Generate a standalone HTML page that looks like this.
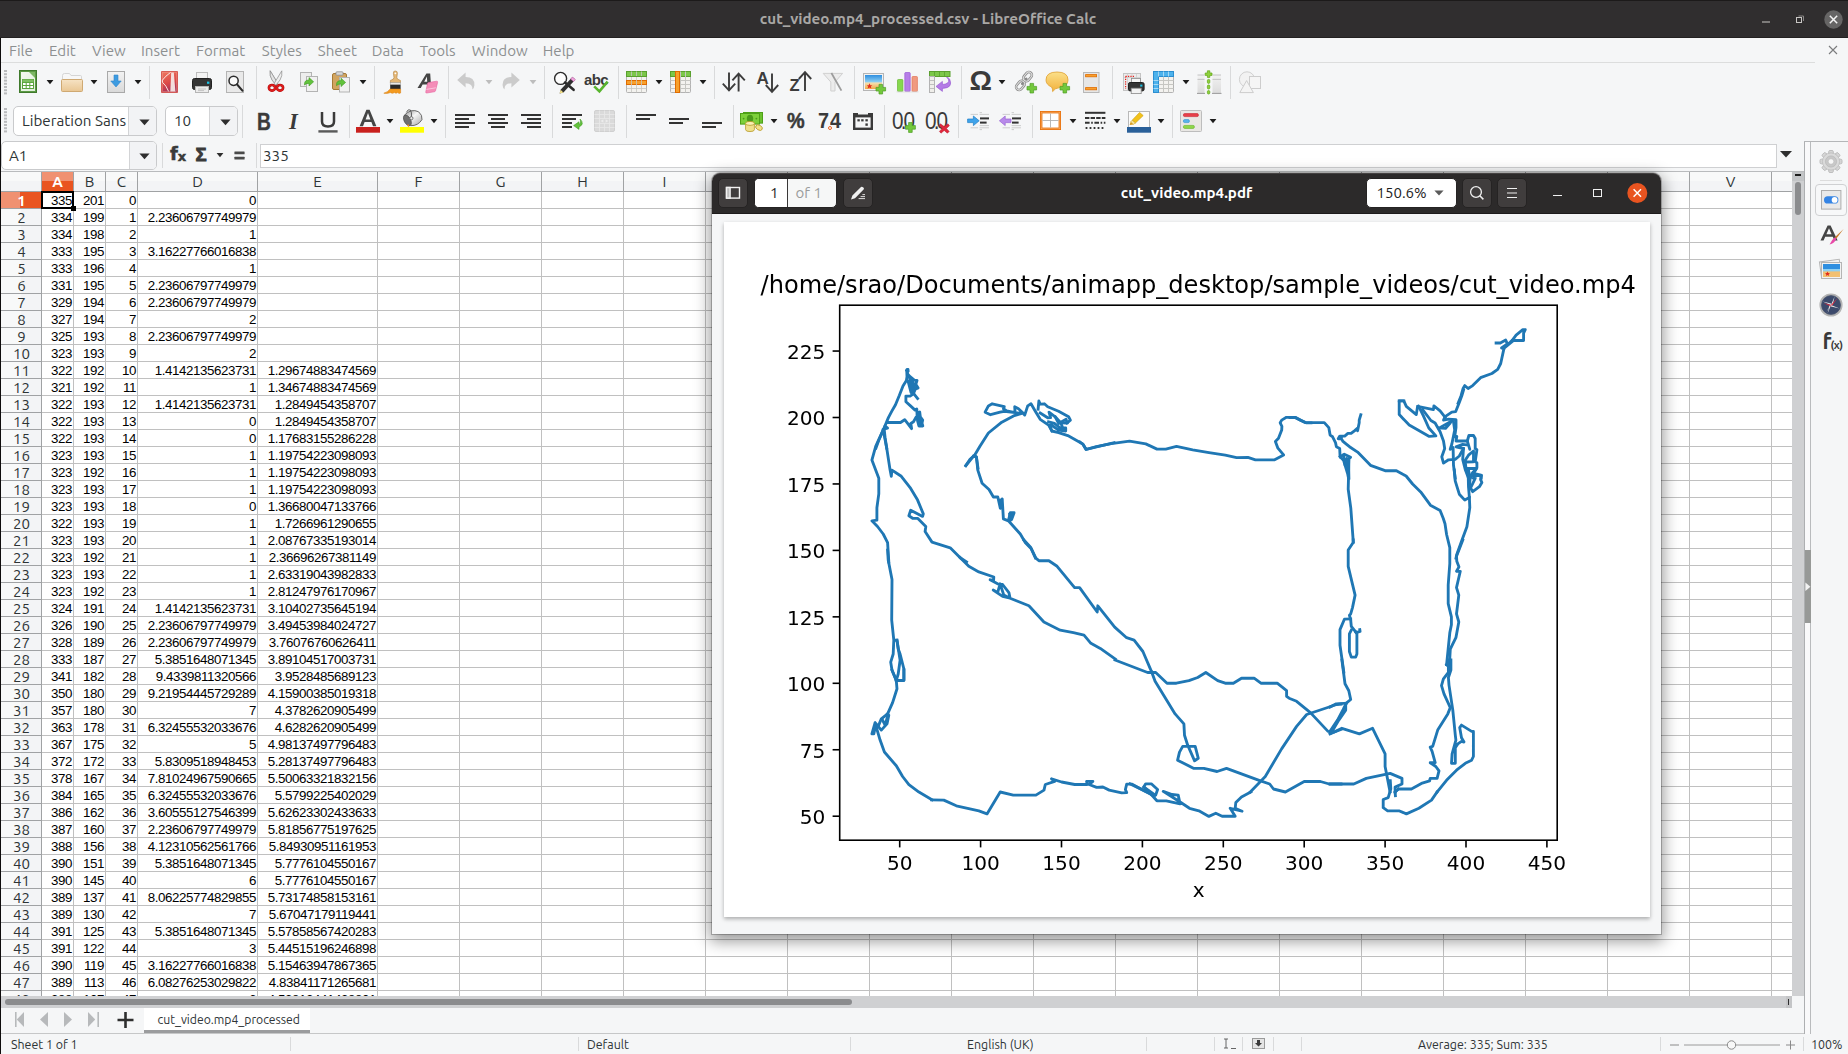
<!DOCTYPE html>
<html lang="en"><head><meta charset="utf-8"><title>cut_video.mp4_processed.csv - LibreOffice Calc</title>
<style>
html,body{margin:0;padding:0;background:#f5f6f7;}
body{width:1848px;height:1054px;overflow:hidden;font-family:"Ubuntu","Liberation Sans",sans-serif;font-size:15.1px;color:#2e3436;}
#root{position:relative;width:1848px;height:1054px;overflow:hidden;background:#f5f6f7;}
.abs{position:absolute;}
.t{position:absolute;white-space:nowrap;line-height:1;}
svg{position:absolute;overflow:visible;}
/* title bar */
#titlebar{position:absolute;left:0;top:0;width:1848px;height:38px;background:#302e2f;box-sizing:border-box;border-top:1px solid #1c1a1a;border-bottom:1px solid #232121;}
#titlebar .title{position:absolute;left:4px;width:1848px;top:9px;text-align:center;color:#a9a7a5;font-weight:bold;font-size:15.17px;line-height:18px;}
/* menu */
#menubar{position:absolute;left:0;top:38px;width:1848px;height:25px;}
#menubar span{position:absolute;top:4px;color:#8d9091;font-size:15.1px;line-height:18px;}
.sep{position:absolute;width:1px;background:#d9dadb;}
.arrow{position:absolute;width:0;height:0;border-left:4px solid transparent;border-right:4px solid transparent;border-top:4px solid #2e2e2e;}
.combo{position:absolute;box-sizing:border-box;border:1px solid #c9cacc;border-radius:5px;background:#fff;overflow:hidden;}
.combo .btn{position:absolute;top:0;bottom:0;right:0;background:#f2f3f5;border-left:1px solid #d3d4d6;}
/* grid */
#grid{position:absolute;left:0;top:172px;width:1792px;height:824px;background:#fff;overflow:hidden;}
.ch{position:absolute;top:0;height:19px;text-align:center;font-size:15.1px;line-height:19px;color:#2e3436;}
.rh{position:absolute;left:1px;width:41px;height:16px;text-align:center;font-size:15.1px;line-height:17px;color:#2e3436;}
.c{position:absolute;height:16px;line-height:17px;font-family:"Liberation Sans",sans-serif;font-size:13.33px;letter-spacing:-0.41px;color:#000;text-align:right;white-space:nowrap;}

#leftedge{position:absolute;left:0;top:38px;width:1px;height:1016px;background:#0e0c0c;}

</style></head>
<body>
<div id="root">
<div id="titlebar">
<div class="title">cut_video.mp4_processed.csv - LibreOffice Calc</div>
<svg style="left:1756.5px;top:7.5px" width="90" height="22" viewBox="0 0 90 22">
<rect x="5" y="12.5" width="8" height="1" fill="#c9c7c5"/>
<rect x="39.5" y="8.5" width="5" height="5" fill="none" stroke="#c9c7c5" stroke-width="1"/>
<path d="M41.5 7 H46.5 V12" fill="none" stroke="#8a8887" stroke-width="1"/>
<circle cx="76.5" cy="10.5" r="9.2" fill="#666565"/>
<path d="M72.8 6.8 L80.2 14.2 M80.2 6.8 L72.8 14.2" stroke="#f4f4f4" stroke-width="1.5" fill="none"/>
</svg>
</div>

<div id="menubar">
<span style="left:9px">File</span><span style="left:49px">Edit</span><span style="left:92px">View</span><span style="left:141px">Insert</span><span style="left:196px">Format</span><span style="left:261.8px">Styles</span><span style="left:317.8px">Sheet</span><span style="left:371.8px">Data</span><span style="left:419.8px">Tools</span><span style="left:471.8px">Window</span><span style="left:542.8px">Help</span>
<svg style="left:1827px;top:6px" width="12" height="12" viewBox="0 0 12 12"><path d="M2 2 L10 10 M10 2 L2 10" stroke="#7a7c7d" stroke-width="1.1" fill="none"/></svg>
<div class="abs" style="left:0;top:24px;width:1815px;height:1px;background:#dcdddd"></div>
</div>

<div id="tb1">
<svg style="left:4px;top:70px" width="3" height="26" viewBox="0 0 3 26"><rect x="0" y="0" width="3" height="2" fill="#b9babc"/><rect x="0" y="3.2" width="3" height="2" fill="#b9babc"/><rect x="0" y="6.4" width="3" height="2" fill="#b9babc"/><rect x="0" y="9.6" width="3" height="2" fill="#b9babc"/><rect x="0" y="12.8" width="3" height="2" fill="#b9babc"/><rect x="0" y="16" width="3" height="2" fill="#b9babc"/><rect x="0" y="19.2" width="3" height="2" fill="#b9babc"/><rect x="0" y="22.4" width="3" height="2" fill="#b9babc"/></svg>
<svg style="left:19px;top:70px" width="18" height="23" viewBox="0 0 18 23"><defs><linearGradient id="gN" x1="0" y1="0" x2="1" y2="1"><stop offset="0" stop-color="#f4f9f1"/><stop offset="1" stop-color="#dfeeda"/></linearGradient></defs><rect x="0.5" y="0.5" width="17" height="22" fill="#5c9a45" stroke="#3f7a2c"/><rect x="2" y="2" width="14" height="19" fill="url(#gN)"/><path d="M10 2 L16 2 L16 8 Z" fill="#7db765"/><rect x="3.5" y="9.5" width="11" height="9" fill="#fff" stroke="#5aa33c"/><path d="M3.5 12.5 H14.5 M3.5 15.5 H14.5 M7.2 9.5 V18.5 M10.8 9.5 V18.5" stroke="#5aa33c" stroke-width="1" fill="none"/><rect x="3.5" y="9.5" width="11" height="2.6" fill="#7fbf62"/></svg>
<svg style="left:46px;top:80px" width="8" height="5" viewBox="0 0 8 5"><path d="M0.6 0 H7.4 L4 4.2 Z" fill="#1c1c1c"/></svg>
<svg style="left:61px;top:72px" width="22" height="20" viewBox="0 0 22 20"><defs><linearGradient id="gF" x1="0" y1="0" x2="0" y2="1"><stop offset="0" stop-color="#f6e3c4"/><stop offset="1" stop-color="#e9c693"/></linearGradient></defs><path d="M1.5 3.5 Q1.5 1.5 3.5 1.5 H8.5 L10 3.5 H19.5 Q20.5 3.5 20.5 4.8 V8 H1.5 Z" fill="#f7f7f7" stroke="#d5d5d5"/><rect x="0.5" y="7.5" width="21" height="12" rx="1" fill="url(#gF)" stroke="#cfa972"/></svg>
<svg style="left:90px;top:80px" width="8" height="5" viewBox="0 0 8 5"><path d="M0.6 0 H7.4 L4 4.2 Z" fill="#1c1c1c"/></svg>
<svg style="left:107px;top:71px" width="18" height="22" viewBox="0 0 18 22"><defs><linearGradient id="gS" x1="0" y1="0" x2="0" y2="1"><stop offset="0" stop-color="#f3f3f3"/><stop offset="1" stop-color="#d9d9d9"/></linearGradient></defs><rect x="0.5" y="0.5" width="17" height="21" fill="url(#gS)" stroke="#a9a9a9"/><path d="M7 4 H11 V10 H14.2 L9 16 L3.8 10 H7 Z" fill="#3d9be0" stroke="#2f86cc" stroke-width="0.6"/></svg>
<svg style="left:133.5px;top:80px" width="8" height="5" viewBox="0 0 8 5"><path d="M0.6 0 H7.4 L4 4.2 Z" fill="#1c1c1c"/></svg>
<div class="sep" style="left:149px;top:66px;height:33px"></div>
<svg style="left:160.5px;top:70.5px" width="17" height="22" viewBox="0 0 17 22"><defs><linearGradient id="gP" x1="0" y1="0" x2="0.3" y2="1"><stop offset="0" stop-color="#ee7a60"/><stop offset="0.6" stop-color="#dc4a48"/><stop offset="1" stop-color="#a8345a"/></linearGradient></defs><rect x="0.6" y="0.6" width="15.9" height="20.8" fill="url(#gP)" stroke="#d2483f" stroke-width="0.8"/><rect x="1.6" y="1.6" width="13.9" height="18.8" fill="none" stroke="#f3a090" stroke-width="0.6" opacity="0.7"/><path d="M10.2 1.4 L12.8 1.4 L14.4 20.4 L9.3 20.4 Z" fill="#f4e6e4" opacity="0.95"/><path d="M9.6 1.4 Q4.4 5 1.4 9.2 L1.4 11.2 Q5.2 14.4 7.6 20.4" fill="none" stroke="#fbe9e6" stroke-width="1"/></svg>
<svg style="left:192px;top:72px" width="20" height="21" viewBox="0 0 20 21"><rect x="4.5" y="0.5" width="11" height="7" fill="#f4f4f4" stroke="#bdbdbd"/><rect x="0.5" y="6.5" width="19" height="11" rx="2" fill="#353535" stroke="#222"/><rect x="15" y="9.6" width="2.4" height="2.2" fill="#19c3e6"/><rect x="3.5" y="14.5" width="13" height="6" fill="#ececec" stroke="#b5b5b5"/><path d="M6 17 H14 M6 18.6 H12" stroke="#b8b8b8" stroke-width="0.8"/></svg>
<svg style="left:226px;top:71px" width="18" height="22" viewBox="0 0 18 22"><rect x="0.5" y="0.5" width="17" height="21" fill="#e9e9e9" stroke="#b4b4b4"/><circle cx="7.6" cy="9.8" r="4.6" fill="#fbfbfb" stroke="#2b2b2b" stroke-width="1.5"/><path d="M11 13.4 L16.4 19.6" stroke="#2b2b2b" stroke-width="2.2" stroke-linecap="round"/></svg>
<div class="sep" style="left:256px;top:66px;height:33px"></div>
<svg style="left:267px;top:70px" width="18" height="23" viewBox="0 0 18 23"><path d="M3.2 0.8 Q2.4 6 5.6 10.4 L9.6 15.6 L8 16.4 L10.6 13 Z" fill="#dcdcdc" stroke="#8a8a8a" stroke-width="0.7"/><path d="M3.2 0.8 L10.8 13.4 L9.2 15.4 L5 10 Q2.4 6 3.2 0.8 Z" fill="#e4e4e4" stroke="#8a8a8a" stroke-width="0.7"/><path d="M14.8 0.8 L7.2 13.4 L8.8 15.4 L13 10 Q15.6 6 14.8 0.8 Z" fill="#efefef" stroke="#8a8a8a" stroke-width="0.7"/><ellipse cx="5" cy="17.8" rx="3.1" ry="2.8" fill="none" stroke="#a80c0c" stroke-width="2.6"/><ellipse cx="13" cy="17.8" rx="3.1" ry="2.8" fill="none" stroke="#a80c0c" stroke-width="2.6"/><ellipse cx="5" cy="17.8" rx="3.1" ry="2.8" fill="none" stroke="#e01c1c" stroke-width="1.6"/><ellipse cx="13" cy="17.8" rx="3.1" ry="2.8" fill="none" stroke="#e01c1c" stroke-width="1.6"/></svg>
<svg style="left:300px;top:72px" width="18" height="20" viewBox="0 0 18 20"><rect x="0.5" y="0.5" width="11" height="14" fill="#ededed" stroke="#b3b3b3"/><rect x="6.5" y="4.5" width="11" height="15" fill="#f1f1f1" stroke="#b3b3b3"/><path d="M4.5 12 Q4.5 8 9 8 V5.6 L13.6 9.8 L9 14 V11.4 Q6 11.2 4.5 13 Z" fill="#62c23c" stroke="#3f9a22" stroke-width="0.6"/></svg>
<svg style="left:332px;top:70.5px" width="18" height="22" viewBox="0 0 18 22"><rect x="0.5" y="2.5" width="14" height="16" rx="1.5" fill="#d2a561" stroke="#a67a36"/><rect x="4" y="0.8" width="7" height="3.4" rx="0.8" fill="#dadada" stroke="#8c8c8c" stroke-width="0.8"/><rect x="7.5" y="6.5" width="10" height="14.5" fill="#f1f1f1" stroke="#b3b3b3"/><path d="M4.5 13.4 Q4.5 9.6 9 9.6 V7.2 L13.6 11.4 L9 15.6 V13 Q6 12.8 4.5 14.6 Z" fill="#62c23c" stroke="#3f9a22" stroke-width="0.6"/></svg>
<svg style="left:359px;top:80px" width="8" height="5" viewBox="0 0 8 5"><path d="M0.6 0 H7.4 L4 4.2 Z" fill="#1c1c1c"/></svg>
<div class="sep" style="left:374px;top:66px;height:33px"></div>
<svg style="left:383px;top:69.5px" width="22" height="25" viewBox="0 0 22 25"><path d="M12.2 1 Q14.6 1 14.4 3.2 L13.8 7.5 Q13.8 9.4 16.4 10 L17.4 10.4 V13 H7.4 V10.4 L8.4 10 Q11 9.4 11 7.5 L10.4 3.2 Q10.2 1 12.2 1 Z" fill="#e5b876" stroke="#b98a47" stroke-width="0.7"/><circle cx="12.4" cy="3.3" r="0.9" fill="#fff"/><rect x="7.2" y="12.6" width="10.4" height="2.2" fill="#e9e9e9" stroke="#9a9a9a" stroke-width="0.5"/><rect x="7.2" y="14.8" width="10.4" height="4.4" fill="#2a2a2a"/><path d="M7.2 19 H17.6 V23 Q16 24 14.5 22.6 Q13 24 11.6 22.6 Q9 24 7.4 22.6 Q4 24 0.8 23.2 Q5 22 7.2 19 Z" fill="#f39a1f" stroke="#d57a0c" stroke-width="0.5"/></svg>
<svg style="left:416px;top:72px" width="24" height="23" viewBox="0 0 24 23"><path d="M1.5 16 L10.4 1.5 H14.2 L15.2 16 H11.6 L11.4 12.6 H6.6 L4.8 16 Z M8.2 9.8 H11.2 L10.9 4.6 Z" fill="#454545"/><path d="M12.4 10.6 L20.6 9.2 Q21.8 9 21.6 10.4 L19.6 18.4 Q19.4 19.6 18.2 19.8 L10.8 21 Q9.4 21.2 9.8 19.8 L11.4 11.8 Q11.6 10.8 12.4 10.6 Z" fill="#f48db8" stroke="#e763a0" stroke-width="0.6"/><path d="M10.4 17.4 L19.9 15.8" stroke="#fbc3dc" stroke-width="1"/></svg>
<div class="sep" style="left:448px;top:66px;height:33px"></div>
<svg style="left:456px;top:71px" width="21" height="20" viewBox="0 0 21 20"><path d="M9.6 1.6 V6 Q18.8 6 18.4 14.2 Q18.2 17 16.4 18.6 Q17 12.4 9.6 12.2 V16.4 L1.2 9 Z" fill="#cbcbcb"/></svg>
<svg style="left:485px;top:80px" width="8" height="5" viewBox="0 0 8 5"><path d="M0.6 0 H7.4 L4 4.2 Z" fill="#bdbdbd"/></svg>
<svg style="left:500px;top:71px" width="21" height="20" viewBox="0 0 21 20"><path d="M11.4 1.6 V6 Q2.2 6 2.6 14.2 Q2.8 17 4.6 18.6 Q4 12.4 11.4 12.2 V16.4 L19.8 9 Z" fill="#cbcbcb"/></svg>
<svg style="left:529px;top:80px" width="8" height="5" viewBox="0 0 8 5"><path d="M0.6 0 H7.4 L4 4.2 Z" fill="#bdbdbd"/></svg>
<div class="sep" style="left:544px;top:66px;height:33px"></div>
<svg style="left:553px;top:71px" width="24" height="24" viewBox="0 0 24 24"><circle cx="7.6" cy="7.4" r="6" fill="#fdfdfd" stroke="#2b2b2b" stroke-width="1.4"/><path d="M12 11.6 L20.6 18.8" stroke="#2b2b2b" stroke-width="2.6" stroke-linecap="round"/><path d="M19.4 6 L22.4 8.6 L10.4 21.4 L6.6 22.6 L7.6 18.8 Z" fill="#2f2f2f"/><path d="M19.4 6 L22.4 8.6 L20.6 10.6 L17.6 8 Z" fill="#f0a3dc" stroke="#c96fb4" stroke-width="0.5"/><path d="M7.6 18.8 L10.4 21.4 L6.6 22.6 Z" fill="#f3e08a"/></svg>
<div class="t" style="left:584px;top:72px;font-size:15px;font-weight:bold;color:#3a3a3a;letter-spacing:-0.6px;font-family:'Liberation Sans',sans-serif">abc</div>
<svg style="left:592px;top:80px" width="18" height="14" viewBox="0 0 18 14"><path d="M2.2 6.4 L7.4 11.4 L15.6 1.6" fill="none" stroke="#58b52e" stroke-width="2.6"/></svg>
<div class="sep" style="left:618px;top:66px;height:33px"></div>
<svg style="left:626px;top:71px" width="21" height="22" viewBox="0 0 21 22"><rect x="0.5" y="0.5" width="20" height="21" rx="1" fill="#f3f2ef" stroke="#b3b3b3"/><rect x="0.5" y="0.5" width="20" height="5" fill="#7cc74a" stroke="#5aa02e"/><rect x="0.5" y="9.5" width="20" height="4" fill="#f8a02b" stroke="#e06c00"/><path d="M0.5 17.5 H20.5 M5.5 0.5 V21.5 M10.5 0.5 V21.5 M15.5 0.5 V21.5" stroke="#c6c6c2" stroke-width="1" fill="none" opacity="0.8"/><path d="M0.5 5.5 H20.5" stroke="#5aa02e"/></svg>
<svg style="left:655px;top:80px" width="8" height="5" viewBox="0 0 8 5"><path d="M0.6 0 H7.4 L4 4.2 Z" fill="#1c1c1c"/></svg>
<svg style="left:670px;top:71px" width="21" height="22" viewBox="0 0 21 22"><rect x="0.5" y="0.5" width="20" height="21" rx="1" fill="#f3f2ef" stroke="#b3b3b3"/><rect x="0.5" y="0.5" width="20" height="5" fill="#7cc74a" stroke="#5aa02e"/><path d="M0.5 9.5 H20.5 M0.5 13.5 H20.5 M0.5 17.5 H20.5 M10.5 0.5 V21.5 M15.5 0.5 V21.5" stroke="#c6c6c2" stroke-width="1" fill="none"/><rect x="5.5" y="0.5" width="4" height="21" fill="#f8a02b" stroke="#e06c00"/></svg>
<svg style="left:699px;top:80px" width="8" height="5" viewBox="0 0 8 5"><path d="M0.6 0 H7.4 L4 4.2 Z" fill="#1c1c1c"/></svg>
<div class="sep" style="left:714px;top:66px;height:33px"></div>
<svg style="left:721px;top:71px" width="26" height="22" viewBox="0 0 26 22"><path d="M8 1.5 V19 M1.8 12.6 L8 19.4 L14.2 12.6" fill="none" stroke="#3c3c3c" stroke-width="1.9"/><path d="M17.6 20.5 V3 M11.4 9.4 L17.6 2.6 L23.8 9.4" fill="none" stroke="#3c3c3c" stroke-width="1.9"/></svg>
<div class="t" style="left:756.5px;top:69.5px;font-size:17px;font-weight:bold;color:#3c3c3c;font-family:'Liberation Sans',sans-serif">A</div>
<svg style="left:764px;top:73px" width="16" height="21" viewBox="0 0 16 21"><path d="M8 0.5 V18.4 M1.8 12 L8 18.8 L14.2 12" fill="none" stroke="#3c3c3c" stroke-width="1.9"/></svg>
<div class="t" style="left:789.5px;top:76.5px;font-size:16.5px;font-weight:bold;color:#3c3c3c;font-family:'Liberation Sans',sans-serif">Z</div>
<svg style="left:797px;top:70px" width="16" height="22" viewBox="0 0 16 22"><path d="M8 21 V2.6 M1.8 9 L8 2.2 L14.2 9" fill="none" stroke="#3c3c3c" stroke-width="1.9"/></svg>
<svg style="left:822px;top:71px" width="22" height="22" viewBox="0 0 22 22"><path d="M1.2 2.4 H20.6 L13 11 V20 H8.8 V11 Z" fill="#ececec" stroke="#d0d0d0" stroke-width="1"/><path d="M9.4 2 L19.4 19.6" stroke="#9c9c9c" stroke-width="1.8"/></svg>
<div class="sep" style="left:854px;top:66px;height:33px"></div>
<svg style="left:863px;top:73px" width="24" height="22" viewBox="0 0 24 22"><defs><linearGradient id="gI" x1="0" y1="0" x2="0" y2="1"><stop offset="0" stop-color="#2f8fe0"/><stop offset="0.5" stop-color="#8fd0f2"/><stop offset="0.56" stop-color="#f5e0b0"/><stop offset="1" stop-color="#f0a848"/></linearGradient></defs><rect x="0.5" y="0.5" width="20" height="17" fill="#f2f2f2" stroke="#b5b5b5"/><rect x="2" y="2" width="17" height="14" fill="url(#gI)"/><path d="M6.5 10.2 L7.3 12.2 L9.4 12.4 L7.8 13.6 L8.4 15.6 L6.5 14.4 L4.6 15.6 L5.2 13.6 L3.6 12.4 L5.7 12.2 Z" fill="#e32a1c"/><path d="M16 11.4 H19.6 V14.4 H22.6 V18 H19.6 V21 H16 V18 H13 V14.4 H16 Z" fill="#73c83c" stroke="#4e9e24" stroke-width="0.7"/></svg>
<svg style="left:896px;top:71px" width="23" height="22" viewBox="0 0 23 22"><rect x="1.5" y="8.5" width="5.4" height="12" rx="0.8" fill="#86d84e" stroke="#68b634" stroke-width="0.7"/><rect x="8.8" y="1.5" width="5.4" height="19" rx="0.8" fill="#b67ee8" stroke="#9a5ad4" stroke-width="0.7"/><rect x="16" y="5.5" width="5.4" height="15" rx="0.8" fill="#f09a80" stroke="#e07458" stroke-width="0.7"/><path d="M0.5 20.9 H22.5" stroke="#d8d8d8" stroke-width="0.8"/></svg>
<svg style="left:929px;top:71px" width="22" height="22" viewBox="0 0 22 22"><rect x="0.5" y="0.5" width="20.5" height="5" fill="#7cc74a" stroke="#5aa02e"/><path d="M5.5 0.5 V5.5 M10.5 0.5 V5.5 M15.5 0.5 V5.5" stroke="#5aa02e" stroke-width="0.8"/><rect x="0.5" y="5.5" width="5" height="16" fill="#efeeea" stroke="#b3b3b3"/><path d="M0.5 9.5 H5.5 M0.5 13.5 H5.5 M0.5 17.5 H5.5" stroke="#b3b3b3" stroke-width="0.8"/><path d="M17.6 6.2 Q22.6 10.8 16.4 13 Q15 13.4 13.4 13.4 V10.4 L7 15.4 L13.4 20.4 V17.4 Q24.6 17 20.6 8 Q19.6 6.6 17.6 6.2 Z" fill="#b47be6" stroke="#9254cf" stroke-width="0.6"/></svg>
<div class="sep" style="left:961px;top:66px;height:33px"></div>
<div class="t" style="left:969.5px;top:67px;font-size:28px;font-weight:bold;color:#3a3a3a;font-family:'Liberation Sans',sans-serif">&#937;</div>
<svg style="left:998px;top:80px" width="8" height="5" viewBox="0 0 8 5"><path d="M0.6 0 H7.4 L4 4.2 Z" fill="#1c1c1c"/></svg>
<svg style="left:1014px;top:70px" width="24" height="25" viewBox="0 0 24 25"><g fill="none" stroke="#8a8a8a" stroke-width="2.6" stroke-linecap="round"><rect x="10.6" y="1.6" width="6" height="10" rx="3" transform="rotate(40 13.6 6.6)"/><rect x="3.4" y="10.4" width="6" height="10" rx="3" transform="rotate(40 6.4 15.4)"/><path d="M8.2 13.8 L12.2 8.8"/></g><g fill="none" stroke="#e2e2e2" stroke-width="1" stroke-linecap="round"><rect x="10.6" y="1.6" width="6" height="10" rx="3" transform="rotate(40 13.6 6.6)"/><rect x="3.4" y="10.4" width="6" height="10" rx="3" transform="rotate(40 6.4 15.4)"/></g><path d="M16 13.4 H19.6 V16.4 H22.6 V20 H19.6 V23 H16 V20 H13 V16.4 H16 Z" fill="#73c83c" stroke="#4e9e24" stroke-width="0.7"/></svg>
<svg style="left:1045px;top:71px" width="26" height="24" viewBox="0 0 26 24"><defs><linearGradient id="gC" x1="0" y1="0" x2="0" y2="1"><stop offset="0" stop-color="#fbe08a"/><stop offset="1" stop-color="#f2b13c"/></linearGradient></defs><path d="M12 1 Q23 1 23 9 Q23 15.4 14.6 16.6 Q10 17 7.6 20.6 Q8 18 6.6 16 Q1 13.6 1 9 Q1 1 12 1 Z" fill="url(#gC)" stroke="#e0a030" stroke-width="0.8"/><path d="M18 12.4 H21.6 V15.4 H24.6 V19 H21.6 V22 H18 V19 H15 V15.4 H18 Z" fill="#73c83c" stroke="#4e9e24" stroke-width="0.7"/></svg>
<svg style="left:1083px;top:72px" width="17" height="21" viewBox="0 0 17 21"><rect x="0.5" y="0.5" width="15.5" height="20" fill="#e6e6e6" stroke="#b8b8b8"/><rect x="2.6" y="2.6" width="11" height="2.2" fill="#f8a02b" stroke="#e06c00" stroke-width="0.8"/><rect x="2.6" y="15.6" width="11" height="2.2" fill="#f8a02b" stroke="#e06c00" stroke-width="0.8"/></svg>
<div class="sep" style="left:1112px;top:66px;height:33px"></div>
<svg style="left:1122.5px;top:73px" width="23" height="22" viewBox="0 0 23 22"><rect x="0.5" y="0.5" width="17" height="17" fill="#ececec" stroke="#c4c4c4"/><path d="M0.5 4.5 H17.5 M4.5 0.5 V17.5 M9 0.5 V4.5 M13.5 0.5 V4.5" stroke="#c9c9c9" stroke-width="0.7"/><path d="M2.6 3.4 H12 M2.6 3.4 V16" stroke="#e8201c" stroke-width="1.2" stroke-dasharray="1.2 1.2" fill="none"/><rect x="8.5" y="5.5" width="9" height="5" fill="#f6f6f6" stroke="#8a8a8a" stroke-width="0.8"/><rect x="5.5" y="9.5" width="15.6" height="8.4" rx="1.6" fill="#353535" stroke="#222"/><rect x="17.2" y="11.6" width="2.2" height="2" fill="#19c3e6"/><rect x="8.2" y="15.2" width="10" height="5.4" fill="#f2f2f2" stroke="#8a8a8a" stroke-width="0.8"/></svg>
<svg style="left:1153px;top:71px" width="21" height="22" viewBox="0 0 21 22"><rect x="0.5" y="0.5" width="20" height="21" rx="1" fill="#f3f2ef" stroke="#b3b3b3"/><path d="M0.5 9.5 H20.5 M0.5 13.5 H20.5 M0.5 17.5 H20.5 M10.5 0.5 V21.5 M15.5 0.5 V21.5" stroke="#c6c6c2" stroke-width="1" fill="none"/><rect x="0.5" y="0.5" width="20" height="5" fill="#4db2ec" stroke="#2c8ed0"/><rect x="0.5" y="0.5" width="5" height="21" fill="#4db2ec" stroke="#2c8ed0"/><path d="M5.5 0.5 V5.5 M10.5 0.5 V5.5 M15.5 0.5 V5.5 M0.5 9.5 H5.5 M0.5 13.5 H5.5 M0.5 17.5 H5.5" stroke="#bfe3f8" stroke-width="0.8"/></svg>
<svg style="left:1182px;top:80px" width="8" height="5" viewBox="0 0 8 5"><path d="M0.6 0 H7.4 L4 4.2 Z" fill="#1c1c1c"/></svg>
<svg style="left:1197px;top:69.5px" width="25" height="25" viewBox="0 0 25 25"><defs><linearGradient id="gW" x1="0" y1="0" x2="0" y2="1"><stop offset="0" stop-color="#f2f2f2"/><stop offset="1" stop-color="#dcdcdc"/></linearGradient></defs><rect x="0.5" y="5" width="7" height="18" fill="url(#gW)"/><path d="M0.5 5 H7.5 M0.5 9.4 H7.5" stroke="#bdbdbd" stroke-width="0.9"/><path d="M0 23.4 H8" stroke="#9a9a9a" stroke-width="1"/><rect x="15.5" y="5" width="8.5" height="18" fill="url(#gW)"/><path d="M15.5 5 H24 M15.5 9.4 H24" stroke="#bdbdbd" stroke-width="0.9"/><path d="M15 23.4 H24.5" stroke="#9a9a9a" stroke-width="1"/><path d="M10.4 0.8 H12.8 V3 H15 V5.4 H12.8 V7.4 H10.4 V5.4 H8.2 V3 H10.4 Z" fill="#8fd23c" stroke="#5fa514" stroke-width="0.7"/><g fill="#8fd23c" stroke="#5fa514" stroke-width="0.7"><rect x="10.4" y="9.4" width="2.4" height="4" rx="1.1"/><rect x="10.4" y="15" width="2.4" height="4" rx="1.1"/><rect x="10.4" y="20.6" width="2.4" height="3.4" rx="1.1"/></g></svg>
<div class="sep" style="left:1230px;top:66px;height:33px"></div>
<svg style="left:1238px;top:70.5px" width="24" height="23" viewBox="0 0 24 23"><circle cx="9" cy="8.4" r="7.6" fill="#f2f2f2" stroke="#d0d0d0"/><rect x="11.5" y="5.5" width="11" height="12" fill="#f5f5f5" stroke="#cdcdcd"/><path d="M8.6 9.6 L15.4 21.6 H1.8 Z" fill="#f4f4f4" stroke="#cdcdcd"/></svg>
</div>
<div id="tb2">
<svg style="left:4px;top:108px" width="3" height="26" viewBox="0 0 3 26"><rect x="0" y="0" width="3" height="2" fill="#b9babc"/><rect x="0" y="3.2" width="3" height="2" fill="#b9babc"/><rect x="0" y="6.4" width="3" height="2" fill="#b9babc"/><rect x="0" y="9.6" width="3" height="2" fill="#b9babc"/><rect x="0" y="12.8" width="3" height="2" fill="#b9babc"/><rect x="0" y="16" width="3" height="2" fill="#b9babc"/><rect x="0" y="19.2" width="3" height="2" fill="#b9babc"/><rect x="0" y="22.4" width="3" height="2" fill="#b9babc"/></svg>
<div class="combo" style="left:13px;top:106px;width:144px;height:30px"><div class="t" style="left:8px;top:6px;font-size:15.2px;color:#2e3436;width:108px;overflow:hidden">Liberation Sans</div><div class="btn" style="width:27px"></div></div>
<svg style="left:138.5px;top:118.5px" width="11" height="7" viewBox="0 0 11 7"><path d="M0.4 0.4 H10.6 L5.5 6.2 Z" fill="#2e2e2e"/></svg>
<div class="combo" style="left:165px;top:106px;width:73px;height:30px"><div class="t" style="left:8px;top:6px;font-size:15.2px;color:#2e3436">10</div><div class="btn" style="width:27px"></div></div>
<svg style="left:219.5px;top:118.5px" width="11" height="7" viewBox="0 0 11 7"><path d="M0.4 0.4 H10.6 L5.5 6.2 Z" fill="#2e2e2e"/></svg>
<div class="sep" style="left:242px;top:105px;height:33px"></div>
<div class="t" style="left:256.5px;top:109.5px;font-size:24px;font-weight:bold;color:#3a3a3a;font-family:'Liberation Sans',sans-serif;transform:scaleX(0.8);transform-origin:0 0;-webkit-text-stroke:0.4px #3a3a3a">B</div>
<div class="t" style="left:289px;top:110.5px;font-size:22.5px;font-style:italic;font-weight:bold;color:#3a3a3a;font-family:'Liberation Serif',serif">I</div>
<svg style="left:318px;top:111px" width="20" height="23" viewBox="0 0 20 23"><path d="M4 1 V10.4 Q4 15.4 10 15.4 Q16 15.4 16 10.4 V1" fill="none" stroke="#3a3a3a" stroke-width="2.5"/><rect x="0.4" y="19.2" width="19.2" height="2.4" fill="#5a5a5a"/></svg>
<div class="sep" style="left:349px;top:105px;height:33px"></div>
<svg style="left:356px;top:109px" width="24" height="24" viewBox="0 0 24 24"><path d="M3.6 17.2 L10.4 0.8 H13.6 L20.4 17.2 H17 L15.4 13 H8.6 L7 17.2 Z M9.6 10.4 H14.4 L12 3.9 Z" fill="#454545"/><rect x="0" y="18" width="24" height="5.7" fill="#c9211e"/></svg>
<svg style="left:386px;top:119px" width="8" height="5" viewBox="0 0 8 5"><path d="M0.6 0 H7.4 L4 4.2 Z" fill="#1c1c1c"/></svg>
<svg style="left:400px;top:108px" width="24" height="25" viewBox="0 0 24 25"><defs><linearGradient id="gB" x1="0" y1="0" x2="1" y2="1"><stop offset="0" stop-color="#8f8f8f"/><stop offset="0.45" stop-color="#f5f5f5"/><stop offset="1" stop-color="#a8a8a8"/></linearGradient></defs><path d="M4.2 7.4 Q11 0 18.6 3.8 Q22.6 7 22 11.6 Q18 18 10.8 17.6 Q4.6 14.6 4.2 7.4 Z" fill="url(#gB)" stroke="#5e5e5e" stroke-width="0.9"/><ellipse cx="7.4" cy="12.4" rx="3.2" ry="5.8" transform="rotate(-28 7.4 12.4)" fill="#6f6f6f" stroke="#4a4a4a" stroke-width="0.7"/><path d="M6.4 4.4 Q8 0.6 10.4 2 Q12 4 11.4 9.4" fill="none" stroke="#5a5a5a" stroke-width="1"/><circle cx="11.4" cy="10.2" r="1.6" fill="#e9e9e9" stroke="#5a5a5a" stroke-width="0.8"/><path d="M7.4 16.6 Q7 18.4 8.6 19 Q9.6 18.4 9 16.8 Z" fill="#f08a1c"/><rect x="0" y="19" width="24" height="5.7" fill="#ffff00"/></svg>
<svg style="left:430px;top:119px" width="8" height="5" viewBox="0 0 8 5"><path d="M0.6 0 H7.4 L4 4.2 Z" fill="#1c1c1c"/></svg>
<div class="sep" style="left:445px;top:105px;height:33px"></div>
<svg style="left:455px;top:110px" width="24" height="22" viewBox="0 0 24 22"><rect x="0" y="4" width="20" height="2" fill="#333"/><rect x="0" y="8" width="14" height="2" fill="#333"/><rect x="0" y="12" width="20" height="2" fill="#333"/><rect x="0" y="16" width="14" height="2" fill="#333"/></svg>
<svg style="left:488px;top:110px" width="24" height="22" viewBox="0 0 24 22"><rect x="0" y="4" width="20" height="2" fill="#333"/><rect x="3" y="8" width="14" height="2" fill="#333"/><rect x="0" y="12" width="20" height="2" fill="#333"/><rect x="3" y="16" width="14" height="2" fill="#333"/></svg>
<svg style="left:521px;top:110px" width="24" height="22" viewBox="0 0 24 22"><rect x="0" y="4" width="20" height="2" fill="#333"/><rect x="6" y="8" width="14" height="2" fill="#333"/><rect x="0" y="12" width="20" height="2" fill="#333"/><rect x="6" y="16" width="14" height="2" fill="#333"/></svg>
<div class="sep" style="left:552px;top:105px;height:33px"></div>
<svg style="left:562px;top:110px" width="24" height="24" viewBox="0 0 24 24"><rect x="0" y="4" width="20" height="2" fill="#333"/><rect x="0" y="8" width="14" height="2" fill="#333"/><rect x="0" y="12" width="10" height="2" fill="#333"/><rect x="0" y="16" width="10" height="2" fill="#333"/><path d="M18 9 Q23 14 17 17 V19.4 L11.6 15.6 L17 11.8 V14.4 Q19.6 13 18 9 Z" fill="#62c23c" stroke="#3f9a22" stroke-width="0.6"/></svg>
<svg style="left:594px;top:110px" width="21" height="22" viewBox="0 0 21 22"><rect x="0.5" y="0.5" width="20" height="21" rx="1.4" fill="#dadada" stroke="#d0d0d0"/><path d="M0.5 4.5 H20.5 M0.5 8.5 H20.5 M0.5 13.5 H20.5 M0.5 17.5 H20.5 M5.5 0.5 V21.5 M10.5 0.5 V8.5 M10.5 13.5 V21.5 M15.5 0.5 V21.5" stroke="#e8e8e8" stroke-width="0.9"/><path d="M9.4 9.2 V12.8 L6.6 11 Z M11.6 9.2 V12.8 L14.4 11 Z" fill="#ececec"/></svg>
<div class="sep" style="left:626px;top:105px;height:33px"></div>
<svg style="left:636px;top:110px" width="24" height="22" viewBox="0 0 24 22"><rect x="0" y="4" width="20" height="2" fill="#333"/><rect x="0" y="8" width="14" height="2" fill="#333"/></svg>
<svg style="left:669px;top:110px" width="24" height="22" viewBox="0 0 24 22"><rect x="0" y="8" width="20" height="2" fill="#333"/><rect x="0" y="12" width="14" height="2" fill="#333"/></svg>
<svg style="left:702px;top:110px" width="24" height="22" viewBox="0 0 24 22"><rect x="0" y="12" width="20" height="2" fill="#333"/><rect x="0" y="16" width="14" height="2" fill="#333"/></svg>
<div class="sep" style="left:733px;top:105px;height:33px"></div>
<svg style="left:740px;top:112px" width="24" height="22" viewBox="0 0 24 22"><rect x="3.5" y="0.5" width="19" height="10.6" fill="#6cc22e" stroke="#4ea018"/><rect x="0.5" y="1.5" width="19" height="10.6" fill="#7dd03a" stroke="#4ea018"/><ellipse cx="10" cy="6.6" rx="3.2" ry="3.8" fill="#4a9a1a"/><circle cx="3.6" cy="6.6" r="0.9" fill="#4a9a1a"/><circle cx="16.4" cy="6.6" r="0.9" fill="#4a9a1a"/><ellipse cx="19" cy="15.6" rx="3.6" ry="2.4" transform="rotate(30 19 15.6)" fill="#f1e08a" stroke="#b89a2a" stroke-width="0.8"/><path d="M5.6 11.4 V17.6 Q5.6 19.6 10 19.6 Q14.4 19.6 14.4 17.6 V11.4 Z" fill="#efe08c" stroke="#b89a2a" stroke-width="0.8"/><ellipse cx="10" cy="11.4" rx="4.4" ry="2" fill="#f8efb6" stroke="#b89a2a" stroke-width="0.8"/></svg>
<svg style="left:770px;top:119px" width="8" height="5" viewBox="0 0 8 5"><path d="M0.6 0 H7.4 L4 4.2 Z" fill="#1c1c1c"/></svg>
<div class="t" style="left:787px;top:110px;font-size:22px;font-weight:bold;color:#3a3a3a;font-family:'Liberation Sans',sans-serif;letter-spacing:-1px;transform:scaleX(0.9);transform-origin:0 0;-webkit-text-stroke:0.5px #3a3a3a">%</div>
<div class="t" style="left:818px;top:110px;font-size:22px;font-weight:bold;color:#3a3a3a;font-family:'Liberation Sans',sans-serif;transform:scaleX(0.9);transform-origin:0 0">7</div>
<div class="t" style="left:830px;top:110px;font-size:22px;font-weight:bold;color:#3a3a3a;font-family:'Liberation Sans',sans-serif;transform:scaleX(0.9);transform-origin:0 0">4</div>
<div class="abs" style="left:827.7px;top:125.8px;width:2px;height:2px;border:0.9px solid #f0641e;border-radius:2px"></div>
<svg style="left:853px;top:113px" width="20" height="17" viewBox="0 0 20 17"><path d="M0 0 H5 V1.6 H15 V0 H20 V17 H0 Z" fill="#3a3a3a"/><rect x="2.4" y="4.4" width="15.2" height="10.2" fill="#f5f6f7"/><rect x="4.4" y="6.2" width="2.4" height="2.2" fill="#3a3a3a"/><rect x="8.2" y="6.2" width="2.4" height="2.2" fill="#3a3a3a"/><rect x="12.4" y="6.2" width="2.4" height="2.2" fill="#3a3a3a"/><rect x="12.4" y="10.4" width="2.4" height="2.4" fill="#3a3a3a"/></svg>
<div class="sep" style="left:884px;top:105px;height:33px"></div>
<div class="t" style="left:892px;top:110px;font-size:23px;color:#3a3a3a;font-family:'Liberation Sans',sans-serif;letter-spacing:-3.2px;transform:scaleX(0.9);transform-origin:0 0">0.0</div><svg style="left:905px;top:122px" width="11" height="11" viewBox="0 0 11 11"><path d="M3.6 0.5 H7.2 V3.6 H10.4 V7.2 H7.2 V10.4 H3.6 V7.2 H0.5 V3.6 H3.6 Z" fill="#73c83c" stroke="#4e9e24" stroke-width="0.7"/></svg>
<div class="t" style="left:925px;top:110px;font-size:23px;color:#3a3a3a;font-family:'Liberation Sans',sans-serif;letter-spacing:-3.2px;transform:scaleX(0.9);transform-origin:0 0">0.0</div><svg style="left:938.5px;top:122.5px" width="11" height="11" viewBox="0 0 11 11"><path d="M1.4 0.8 L5.2 3.6 L9 0.8 L10.4 2.8 L7.4 5.4 L10.2 8.4 L8.4 10.2 L5.2 7.4 L2 10.2 L0.4 8.4 L3.2 5.4 L0.2 2.8 Z" fill="#e0283c" stroke="#b8182c" stroke-width="0.5"/></svg>
<div class="sep" style="left:958px;top:105px;height:33px"></div>
<svg style="left:967px;top:112px" width="23" height="19" viewBox="0 0 23 19"><path d="M3.6 2.4 H11 M12.6 0.6 H15 M12.6 2.4 H22 M12.6 13.6 H22 M3.6 15.8 H11 M12.6 15.8 H22 M12.6 17.6 H15" stroke="#bdbdbd" stroke-width="0.7"/><rect x="13" y="5.4" width="9" height="2" fill="#333"/><rect x="13" y="9.6" width="6.6" height="2" fill="#333"/><path d="M0.6 7 H6.4 V4 L12.2 8.8 L6.4 13.6 V10.6 H0.6 Z" fill="#3fa3ea" stroke="#1f7fc8" stroke-width="0.7"/></svg>
<svg style="left:999px;top:112px" width="23" height="19" viewBox="0 0 23 19"><path d="M3.6 2.4 H11 M12.6 0.6 H15 M12.6 2.4 H22 M12.6 13.6 H22 M3.6 15.8 H11 M12.6 15.8 H22 M12.6 17.6 H15" stroke="#bdbdbd" stroke-width="0.7"/><rect x="13" y="5.4" width="9" height="2" fill="#333"/><rect x="13" y="9.6" width="6.6" height="2" fill="#333"/><path d="M12 7 H6.2 V4 L0.4 8.8 L6.2 13.6 V10.6 H12 Z" fill="#b88aea" stroke="#9a62d4" stroke-width="0.7"/></svg>
<div class="sep" style="left:1032px;top:105px;height:33px"></div>
<svg style="left:1040px;top:111px" width="21" height="19" viewBox="0 0 21 19"><rect x="1.2" y="1.2" width="18.6" height="16.6" fill="#fff" stroke="#e8710c" stroke-width="2.4"/><rect x="1.2" y="1.2" width="18.6" height="16.6" fill="none" stroke="#f8b06a" stroke-width="0.7"/><path d="M10.5 2.4 V16.6 M2.4 9.5 H18.6" stroke="#b0b0b0" stroke-width="0.9"/></svg>
<svg style="left:1069px;top:119px" width="8" height="5" viewBox="0 0 8 5"><path d="M0.6 0 H7.4 L4 4.2 Z" fill="#1c1c1c"/></svg>
<svg style="left:1084.5px;top:111px" width="21" height="20" viewBox="0 0 21 20"><rect x="0" y="0.8" width="20.4" height="2" fill="#333"/><path d="M0 7 H20.4" stroke="#333" stroke-width="2" stroke-dasharray="4.4 1.2"/><path d="M0 11.8 H20.4" stroke="#333" stroke-width="2" stroke-dasharray="4.6 1.6 1.6 1.6"/><path d="M0.6 17 H20.4" stroke="#333" stroke-width="2" stroke-dasharray="1.8 2.2"/></svg>
<svg style="left:1113px;top:119px" width="8" height="5" viewBox="0 0 8 5"><path d="M0.6 0 H7.4 L4 4.2 Z" fill="#1c1c1c"/></svg>
<svg style="left:1127px;top:110px" width="24" height="23" viewBox="0 0 24 23"><rect x="1.5" y="1.5" width="21" height="16" fill="#fbfbfb" stroke="#b9b9b9"/><path d="M12.6 2.4 L16.2 5.6 L8.4 13 L5.2 10.2 Z" fill="#f2c21a" stroke="#c99a0a" stroke-width="0.6"/><path d="M5.2 10.2 L8.4 13 L6.4 14.4 L3.6 12 Z" fill="#f7e39a" stroke="#c99a0a" stroke-width="0.5"/><path d="M3.6 12 L6.4 14.4 L2.6 15 Z" fill="#d89a1a"/><rect x="0" y="17" width="24" height="5.7" fill="#2a6099"/></svg>
<svg style="left:1157px;top:119px" width="8" height="5" viewBox="0 0 8 5"><path d="M0.6 0 H7.4 L4 4.2 Z" fill="#1c1c1c"/></svg>
<div class="sep" style="left:1172px;top:105px;height:33px"></div>
<svg style="left:1180px;top:110px" width="22" height="22" viewBox="0 0 22 22"><rect x="0.5" y="0.5" width="21" height="21" rx="1" fill="#e9e7e4" stroke="#bdbdbd"/><rect x="3.4" y="3.6" width="15" height="3" rx="1.3" fill="#e8404a" stroke="#c4202c" stroke-width="0.6"/><rect x="3.4" y="9.6" width="6" height="3" rx="1.3" fill="#5ab4ea" stroke="#2c8ed0" stroke-width="0.6"/><rect x="3.4" y="15.4" width="11" height="3" rx="1.3" fill="#8fd84a" stroke="#64b024" stroke-width="0.6"/></svg>
<svg style="left:1209px;top:119px" width="8" height="5" viewBox="0 0 8 5"><path d="M0.6 0 H7.4 L4 4.2 Z" fill="#1c1c1c"/></svg>
</div>
<div id="fbar">
<div class="combo" style="left:1px;top:141px;width:156px;height:29px;border-radius:5px"><div class="t" style="left:7px;top:6px;font-size:15.2px;color:#2e3436">A1</div><div class="btn" style="width:26px"></div></div>
<svg style="left:138.5px;top:152.5px" width="11" height="7" viewBox="0 0 11 7"><path d="M0.4 0.4 H10.6 L5.5 6.2 Z" fill="#2e2e2e"/></svg>
<div class="sep" style="left:162px;top:143px;height:25px"></div>
<div class="t" style="left:170px;top:144.6px;font-size:18px;font-weight:bold;color:#3a3a3a;-webkit-text-stroke:0.5px #3a3a3a;font-family:'DejaVu Sans','Liberation Sans',sans-serif">f</div>
<div class="t" style="left:177.8px;top:150.2px;font-size:13px;font-weight:bold;color:#3a3a3a;-webkit-text-stroke:0.5px #3a3a3a;font-family:'DejaVu Sans','Liberation Sans',sans-serif">x</div>
<div class="t" style="left:195.5px;top:145.5px;font-size:18.5px;font-weight:bold;color:#3a3a3a;-webkit-text-stroke:0.9px #3a3a3a;font-family:'Liberation Sans',sans-serif">&#931;</div>
<svg style="left:216px;top:152.5px" width="8" height="5" viewBox="0 0 8 5"><path d="M0.6 0 H7.4 L4 4.2 Z" fill="#2e2e2e"/></svg>
<svg style="left:233.5px;top:150.5px" width="11" height="9" viewBox="0 0 11 9"><rect x="0.4" y="0.6" width="10.2" height="2.7" rx="0.5" fill="#4a4a4a"/><rect x="0.4" y="5.7" width="10.2" height="2.7" rx="0.5" fill="#4a4a4a"/></svg>
<div class="sep" style="left:256px;top:143px;height:25px"></div>
<div class="abs" style="left:259.5px;top:144px;width:1517px;height:24px;background:#fff;border:1px solid #cfd0d2;box-sizing:border-box"></div>
<div class="t" style="left:263px;top:148.3px;font-size:15.2px;color:#2e3436">335</div>
<svg style="left:1779px;top:150px" width="14" height="9" viewBox="0 0 14 9"><path d="M1 1 H13 L7 7.6 Z" fill="#2e2e2e"/></svg>
</div>
<div class="abs" style="left:0;top:171px;width:1804px;height:1px;background:#b9bbbd"></div>
<div id="grid">
<div class="abs" style="left:42px;top:36px;width:1750px;height:1px;background:#c0c0c0"></div><div class="abs" style="left:42px;top:53px;width:1750px;height:1px;background:#c0c0c0"></div><div class="abs" style="left:42px;top:70px;width:1750px;height:1px;background:#c0c0c0"></div><div class="abs" style="left:42px;top:87px;width:1750px;height:1px;background:#c0c0c0"></div><div class="abs" style="left:42px;top:104px;width:1750px;height:1px;background:#c0c0c0"></div><div class="abs" style="left:42px;top:121px;width:1750px;height:1px;background:#c0c0c0"></div><div class="abs" style="left:42px;top:138px;width:1750px;height:1px;background:#c0c0c0"></div><div class="abs" style="left:42px;top:155px;width:1750px;height:1px;background:#c0c0c0"></div><div class="abs" style="left:42px;top:172px;width:1750px;height:1px;background:#c0c0c0"></div><div class="abs" style="left:42px;top:189px;width:1750px;height:1px;background:#c0c0c0"></div><div class="abs" style="left:42px;top:206px;width:1750px;height:1px;background:#c0c0c0"></div><div class="abs" style="left:42px;top:223px;width:1750px;height:1px;background:#c0c0c0"></div><div class="abs" style="left:42px;top:240px;width:1750px;height:1px;background:#c0c0c0"></div><div class="abs" style="left:42px;top:257px;width:1750px;height:1px;background:#c0c0c0"></div><div class="abs" style="left:42px;top:274px;width:1750px;height:1px;background:#c0c0c0"></div><div class="abs" style="left:42px;top:291px;width:1750px;height:1px;background:#c0c0c0"></div><div class="abs" style="left:42px;top:308px;width:1750px;height:1px;background:#c0c0c0"></div><div class="abs" style="left:42px;top:325px;width:1750px;height:1px;background:#c0c0c0"></div><div class="abs" style="left:42px;top:342px;width:1750px;height:1px;background:#c0c0c0"></div><div class="abs" style="left:42px;top:359px;width:1750px;height:1px;background:#c0c0c0"></div><div class="abs" style="left:42px;top:376px;width:1750px;height:1px;background:#c0c0c0"></div><div class="abs" style="left:42px;top:393px;width:1750px;height:1px;background:#c0c0c0"></div><div class="abs" style="left:42px;top:410px;width:1750px;height:1px;background:#c0c0c0"></div><div class="abs" style="left:42px;top:427px;width:1750px;height:1px;background:#c0c0c0"></div><div class="abs" style="left:42px;top:444px;width:1750px;height:1px;background:#c0c0c0"></div><div class="abs" style="left:42px;top:461px;width:1750px;height:1px;background:#c0c0c0"></div><div class="abs" style="left:42px;top:478px;width:1750px;height:1px;background:#c0c0c0"></div><div class="abs" style="left:42px;top:495px;width:1750px;height:1px;background:#c0c0c0"></div><div class="abs" style="left:42px;top:512px;width:1750px;height:1px;background:#c0c0c0"></div><div class="abs" style="left:42px;top:529px;width:1750px;height:1px;background:#c0c0c0"></div><div class="abs" style="left:42px;top:546px;width:1750px;height:1px;background:#c0c0c0"></div><div class="abs" style="left:42px;top:563px;width:1750px;height:1px;background:#c0c0c0"></div><div class="abs" style="left:42px;top:580px;width:1750px;height:1px;background:#c0c0c0"></div><div class="abs" style="left:42px;top:597px;width:1750px;height:1px;background:#c0c0c0"></div><div class="abs" style="left:42px;top:614px;width:1750px;height:1px;background:#c0c0c0"></div><div class="abs" style="left:42px;top:631px;width:1750px;height:1px;background:#c0c0c0"></div><div class="abs" style="left:42px;top:648px;width:1750px;height:1px;background:#c0c0c0"></div><div class="abs" style="left:42px;top:665px;width:1750px;height:1px;background:#c0c0c0"></div><div class="abs" style="left:42px;top:682px;width:1750px;height:1px;background:#c0c0c0"></div><div class="abs" style="left:42px;top:699px;width:1750px;height:1px;background:#c0c0c0"></div><div class="abs" style="left:42px;top:716px;width:1750px;height:1px;background:#c0c0c0"></div><div class="abs" style="left:42px;top:733px;width:1750px;height:1px;background:#c0c0c0"></div><div class="abs" style="left:42px;top:750px;width:1750px;height:1px;background:#c0c0c0"></div><div class="abs" style="left:42px;top:767px;width:1750px;height:1px;background:#c0c0c0"></div><div class="abs" style="left:42px;top:784px;width:1750px;height:1px;background:#c0c0c0"></div><div class="abs" style="left:42px;top:801px;width:1750px;height:1px;background:#c0c0c0"></div><div class="abs" style="left:42px;top:818px;width:1750px;height:1px;background:#c0c0c0"></div><div class="abs" style="left:42px;top:835px;width:1750px;height:1px;background:#c0c0c0"></div>
<div class="abs" style="left:73px;top:20px;width:1px;height:804px;background:#c0c0c0"></div><div class="abs" style="left:105px;top:20px;width:1px;height:804px;background:#c0c0c0"></div><div class="abs" style="left:137px;top:20px;width:1px;height:804px;background:#c0c0c0"></div><div class="abs" style="left:257px;top:20px;width:1px;height:804px;background:#c0c0c0"></div><div class="abs" style="left:377px;top:20px;width:1px;height:804px;background:#c0c0c0"></div><div class="abs" style="left:459px;top:20px;width:1px;height:804px;background:#c0c0c0"></div><div class="abs" style="left:541px;top:20px;width:1px;height:804px;background:#c0c0c0"></div><div class="abs" style="left:623px;top:20px;width:1px;height:804px;background:#c0c0c0"></div><div class="abs" style="left:705px;top:20px;width:1px;height:804px;background:#c0c0c0"></div><div class="abs" style="left:787px;top:20px;width:1px;height:804px;background:#c0c0c0"></div><div class="abs" style="left:869px;top:20px;width:1px;height:804px;background:#c0c0c0"></div><div class="abs" style="left:951px;top:20px;width:1px;height:804px;background:#c0c0c0"></div><div class="abs" style="left:1033px;top:20px;width:1px;height:804px;background:#c0c0c0"></div><div class="abs" style="left:1115px;top:20px;width:1px;height:804px;background:#c0c0c0"></div><div class="abs" style="left:1197px;top:20px;width:1px;height:804px;background:#c0c0c0"></div><div class="abs" style="left:1279px;top:20px;width:1px;height:804px;background:#c0c0c0"></div><div class="abs" style="left:1361px;top:20px;width:1px;height:804px;background:#c0c0c0"></div><div class="abs" style="left:1443px;top:20px;width:1px;height:804px;background:#c0c0c0"></div><div class="abs" style="left:1525px;top:20px;width:1px;height:804px;background:#c0c0c0"></div><div class="abs" style="left:1607px;top:20px;width:1px;height:804px;background:#c0c0c0"></div><div class="abs" style="left:1689px;top:20px;width:1px;height:804px;background:#c0c0c0"></div><div class="abs" style="left:1771px;top:20px;width:1px;height:804px;background:#c0c0c0"></div>
<div class="abs" style="left:0;top:0;width:1792px;height:19px;background:linear-gradient(#f8f9f9 0,#f8f9f9 50%,#f3f4f6 50%,#f3f4f6 100%)"></div>
<div class="abs" style="left:0;top:19px;width:1792px;height:1px;background:#a0a2a4"></div>
<div class="abs" style="left:0;top:20px;width:41px;height:804px;background:linear-gradient(90deg,#f8f9f9 0,#f8f9f9 50%,#f3f4f6 50%,#f3f4f6 100%)"></div>
<div class="abs" style="left:41px;top:0;width:1px;height:824px;background:#a0a2a4"></div>
<div class="abs" style="left:42px;top:0;width:31px;height:19px;background:linear-gradient(#f09171 0,#f09171 50%,#e95420 50%,#e95420 100%)"></div>
<div class="abs" style="left:0;top:20px;width:41px;height:16px;background:linear-gradient(90deg,#f09171 0,#f09171 49%,#e95420 49%,#e95420 100%)"></div>
<div class="ch" style="left:42px;width:31px;color:#fff;font-weight:bold">A</div>
<div class="abs" style="left:73px;top:0;width:1px;height:19px;background:#a0a2a4"></div>
<div class="ch" style="left:74px;width:31px;color:#2e3436">B</div>
<div class="abs" style="left:105px;top:0;width:1px;height:19px;background:#a0a2a4"></div>
<div class="ch" style="left:106px;width:31px;color:#2e3436">C</div>
<div class="abs" style="left:137px;top:0;width:1px;height:19px;background:#a0a2a4"></div>
<div class="ch" style="left:138px;width:119px;color:#2e3436">D</div>
<div class="abs" style="left:257px;top:0;width:1px;height:19px;background:#a0a2a4"></div>
<div class="ch" style="left:258px;width:119px;color:#2e3436">E</div>
<div class="abs" style="left:377px;top:0;width:1px;height:19px;background:#a0a2a4"></div>
<div class="ch" style="left:378px;width:81px;color:#2e3436">F</div>
<div class="abs" style="left:459px;top:0;width:1px;height:19px;background:#a0a2a4"></div>
<div class="ch" style="left:460px;width:81px;color:#2e3436">G</div>
<div class="abs" style="left:541px;top:0;width:1px;height:19px;background:#a0a2a4"></div>
<div class="ch" style="left:542px;width:81px;color:#2e3436">H</div>
<div class="abs" style="left:623px;top:0;width:1px;height:19px;background:#a0a2a4"></div>
<div class="ch" style="left:624px;width:81px;color:#2e3436">I</div>
<div class="abs" style="left:705px;top:0;width:1px;height:19px;background:#a0a2a4"></div>
<div class="ch" style="left:706px;width:81px;color:#2e3436">J</div>
<div class="abs" style="left:787px;top:0;width:1px;height:19px;background:#a0a2a4"></div>
<div class="ch" style="left:788px;width:81px;color:#2e3436">K</div>
<div class="abs" style="left:869px;top:0;width:1px;height:19px;background:#a0a2a4"></div>
<div class="ch" style="left:870px;width:81px;color:#2e3436">L</div>
<div class="abs" style="left:951px;top:0;width:1px;height:19px;background:#a0a2a4"></div>
<div class="ch" style="left:952px;width:81px;color:#2e3436">M</div>
<div class="abs" style="left:1033px;top:0;width:1px;height:19px;background:#a0a2a4"></div>
<div class="ch" style="left:1034px;width:81px;color:#2e3436">N</div>
<div class="abs" style="left:1115px;top:0;width:1px;height:19px;background:#a0a2a4"></div>
<div class="ch" style="left:1116px;width:81px;color:#2e3436">O</div>
<div class="abs" style="left:1197px;top:0;width:1px;height:19px;background:#a0a2a4"></div>
<div class="ch" style="left:1198px;width:81px;color:#2e3436">P</div>
<div class="abs" style="left:1279px;top:0;width:1px;height:19px;background:#a0a2a4"></div>
<div class="ch" style="left:1280px;width:81px;color:#2e3436">Q</div>
<div class="abs" style="left:1361px;top:0;width:1px;height:19px;background:#a0a2a4"></div>
<div class="ch" style="left:1362px;width:81px;color:#2e3436">R</div>
<div class="abs" style="left:1443px;top:0;width:1px;height:19px;background:#a0a2a4"></div>
<div class="ch" style="left:1444px;width:81px;color:#2e3436">S</div>
<div class="abs" style="left:1525px;top:0;width:1px;height:19px;background:#a0a2a4"></div>
<div class="ch" style="left:1526px;width:81px;color:#2e3436">T</div>
<div class="abs" style="left:1607px;top:0;width:1px;height:19px;background:#a0a2a4"></div>
<div class="ch" style="left:1608px;width:81px;color:#2e3436">U</div>
<div class="abs" style="left:1689px;top:0;width:1px;height:19px;background:#a0a2a4"></div>
<div class="ch" style="left:1690px;width:81px;color:#2e3436">V</div>
<div class="abs" style="left:1771px;top:0;width:1px;height:19px;background:#a0a2a4"></div>
<div class="ch" style="left:1772px;width:81px;color:#2e3436">W</div>
<div class="rh" style="top:20px;color:#fff;font-weight:bold">1</div>
<div class="abs" style="left:0;top:36px;width:41px;height:1px;background:#a0a2a4"></div>
<div class="rh" style="top:37px;color:#2e3436">2</div>
<div class="abs" style="left:0;top:53px;width:41px;height:1px;background:#a0a2a4"></div>
<div class="rh" style="top:54px;color:#2e3436">3</div>
<div class="abs" style="left:0;top:70px;width:41px;height:1px;background:#a0a2a4"></div>
<div class="rh" style="top:71px;color:#2e3436">4</div>
<div class="abs" style="left:0;top:87px;width:41px;height:1px;background:#a0a2a4"></div>
<div class="rh" style="top:88px;color:#2e3436">5</div>
<div class="abs" style="left:0;top:104px;width:41px;height:1px;background:#a0a2a4"></div>
<div class="rh" style="top:105px;color:#2e3436">6</div>
<div class="abs" style="left:0;top:121px;width:41px;height:1px;background:#a0a2a4"></div>
<div class="rh" style="top:122px;color:#2e3436">7</div>
<div class="abs" style="left:0;top:138px;width:41px;height:1px;background:#a0a2a4"></div>
<div class="rh" style="top:139px;color:#2e3436">8</div>
<div class="abs" style="left:0;top:155px;width:41px;height:1px;background:#a0a2a4"></div>
<div class="rh" style="top:156px;color:#2e3436">9</div>
<div class="abs" style="left:0;top:172px;width:41px;height:1px;background:#a0a2a4"></div>
<div class="rh" style="top:173px;color:#2e3436">10</div>
<div class="abs" style="left:0;top:189px;width:41px;height:1px;background:#a0a2a4"></div>
<div class="rh" style="top:190px;color:#2e3436">11</div>
<div class="abs" style="left:0;top:206px;width:41px;height:1px;background:#a0a2a4"></div>
<div class="rh" style="top:207px;color:#2e3436">12</div>
<div class="abs" style="left:0;top:223px;width:41px;height:1px;background:#a0a2a4"></div>
<div class="rh" style="top:224px;color:#2e3436">13</div>
<div class="abs" style="left:0;top:240px;width:41px;height:1px;background:#a0a2a4"></div>
<div class="rh" style="top:241px;color:#2e3436">14</div>
<div class="abs" style="left:0;top:257px;width:41px;height:1px;background:#a0a2a4"></div>
<div class="rh" style="top:258px;color:#2e3436">15</div>
<div class="abs" style="left:0;top:274px;width:41px;height:1px;background:#a0a2a4"></div>
<div class="rh" style="top:275px;color:#2e3436">16</div>
<div class="abs" style="left:0;top:291px;width:41px;height:1px;background:#a0a2a4"></div>
<div class="rh" style="top:292px;color:#2e3436">17</div>
<div class="abs" style="left:0;top:308px;width:41px;height:1px;background:#a0a2a4"></div>
<div class="rh" style="top:309px;color:#2e3436">18</div>
<div class="abs" style="left:0;top:325px;width:41px;height:1px;background:#a0a2a4"></div>
<div class="rh" style="top:326px;color:#2e3436">19</div>
<div class="abs" style="left:0;top:342px;width:41px;height:1px;background:#a0a2a4"></div>
<div class="rh" style="top:343px;color:#2e3436">20</div>
<div class="abs" style="left:0;top:359px;width:41px;height:1px;background:#a0a2a4"></div>
<div class="rh" style="top:360px;color:#2e3436">21</div>
<div class="abs" style="left:0;top:376px;width:41px;height:1px;background:#a0a2a4"></div>
<div class="rh" style="top:377px;color:#2e3436">22</div>
<div class="abs" style="left:0;top:393px;width:41px;height:1px;background:#a0a2a4"></div>
<div class="rh" style="top:394px;color:#2e3436">23</div>
<div class="abs" style="left:0;top:410px;width:41px;height:1px;background:#a0a2a4"></div>
<div class="rh" style="top:411px;color:#2e3436">24</div>
<div class="abs" style="left:0;top:427px;width:41px;height:1px;background:#a0a2a4"></div>
<div class="rh" style="top:428px;color:#2e3436">25</div>
<div class="abs" style="left:0;top:444px;width:41px;height:1px;background:#a0a2a4"></div>
<div class="rh" style="top:445px;color:#2e3436">26</div>
<div class="abs" style="left:0;top:461px;width:41px;height:1px;background:#a0a2a4"></div>
<div class="rh" style="top:462px;color:#2e3436">27</div>
<div class="abs" style="left:0;top:478px;width:41px;height:1px;background:#a0a2a4"></div>
<div class="rh" style="top:479px;color:#2e3436">28</div>
<div class="abs" style="left:0;top:495px;width:41px;height:1px;background:#a0a2a4"></div>
<div class="rh" style="top:496px;color:#2e3436">29</div>
<div class="abs" style="left:0;top:512px;width:41px;height:1px;background:#a0a2a4"></div>
<div class="rh" style="top:513px;color:#2e3436">30</div>
<div class="abs" style="left:0;top:529px;width:41px;height:1px;background:#a0a2a4"></div>
<div class="rh" style="top:530px;color:#2e3436">31</div>
<div class="abs" style="left:0;top:546px;width:41px;height:1px;background:#a0a2a4"></div>
<div class="rh" style="top:547px;color:#2e3436">32</div>
<div class="abs" style="left:0;top:563px;width:41px;height:1px;background:#a0a2a4"></div>
<div class="rh" style="top:564px;color:#2e3436">33</div>
<div class="abs" style="left:0;top:580px;width:41px;height:1px;background:#a0a2a4"></div>
<div class="rh" style="top:581px;color:#2e3436">34</div>
<div class="abs" style="left:0;top:597px;width:41px;height:1px;background:#a0a2a4"></div>
<div class="rh" style="top:598px;color:#2e3436">35</div>
<div class="abs" style="left:0;top:614px;width:41px;height:1px;background:#a0a2a4"></div>
<div class="rh" style="top:615px;color:#2e3436">36</div>
<div class="abs" style="left:0;top:631px;width:41px;height:1px;background:#a0a2a4"></div>
<div class="rh" style="top:632px;color:#2e3436">37</div>
<div class="abs" style="left:0;top:648px;width:41px;height:1px;background:#a0a2a4"></div>
<div class="rh" style="top:649px;color:#2e3436">38</div>
<div class="abs" style="left:0;top:665px;width:41px;height:1px;background:#a0a2a4"></div>
<div class="rh" style="top:666px;color:#2e3436">39</div>
<div class="abs" style="left:0;top:682px;width:41px;height:1px;background:#a0a2a4"></div>
<div class="rh" style="top:683px;color:#2e3436">40</div>
<div class="abs" style="left:0;top:699px;width:41px;height:1px;background:#a0a2a4"></div>
<div class="rh" style="top:700px;color:#2e3436">41</div>
<div class="abs" style="left:0;top:716px;width:41px;height:1px;background:#a0a2a4"></div>
<div class="rh" style="top:717px;color:#2e3436">42</div>
<div class="abs" style="left:0;top:733px;width:41px;height:1px;background:#a0a2a4"></div>
<div class="rh" style="top:734px;color:#2e3436">43</div>
<div class="abs" style="left:0;top:750px;width:41px;height:1px;background:#a0a2a4"></div>
<div class="rh" style="top:751px;color:#2e3436">44</div>
<div class="abs" style="left:0;top:767px;width:41px;height:1px;background:#a0a2a4"></div>
<div class="rh" style="top:768px;color:#2e3436">45</div>
<div class="abs" style="left:0;top:784px;width:41px;height:1px;background:#a0a2a4"></div>
<div class="rh" style="top:785px;color:#2e3436">46</div>
<div class="abs" style="left:0;top:801px;width:41px;height:1px;background:#a0a2a4"></div>
<div class="rh" style="top:802px;color:#2e3436">47</div>
<div class="abs" style="left:0;top:818px;width:41px;height:1px;background:#a0a2a4"></div>
<div class="rh" style="top:819px;color:#2e3436">48</div>
<div class="abs" style="left:0;top:835px;width:41px;height:1px;background:#a0a2a4"></div>
<div class="c" style="left:42px;top:20px;width:30px">335</div>
<div class="c" style="left:74px;top:20px;width:30px">201</div>
<div class="c" style="left:106px;top:20px;width:30px">0</div>
<div class="c" style="left:138px;top:20px;width:118px">0</div>
<div class="c" style="left:42px;top:37px;width:30px">334</div>
<div class="c" style="left:74px;top:37px;width:30px">199</div>
<div class="c" style="left:106px;top:37px;width:30px">1</div>
<div class="c" style="left:138px;top:37px;width:118px">2.23606797749979</div>
<div class="c" style="left:42px;top:54px;width:30px">334</div>
<div class="c" style="left:74px;top:54px;width:30px">198</div>
<div class="c" style="left:106px;top:54px;width:30px">2</div>
<div class="c" style="left:138px;top:54px;width:118px">1</div>
<div class="c" style="left:42px;top:71px;width:30px">333</div>
<div class="c" style="left:74px;top:71px;width:30px">195</div>
<div class="c" style="left:106px;top:71px;width:30px">3</div>
<div class="c" style="left:138px;top:71px;width:118px">3.16227766016838</div>
<div class="c" style="left:42px;top:88px;width:30px">333</div>
<div class="c" style="left:74px;top:88px;width:30px">196</div>
<div class="c" style="left:106px;top:88px;width:30px">4</div>
<div class="c" style="left:138px;top:88px;width:118px">1</div>
<div class="c" style="left:42px;top:105px;width:30px">331</div>
<div class="c" style="left:74px;top:105px;width:30px">195</div>
<div class="c" style="left:106px;top:105px;width:30px">5</div>
<div class="c" style="left:138px;top:105px;width:118px">2.23606797749979</div>
<div class="c" style="left:42px;top:122px;width:30px">329</div>
<div class="c" style="left:74px;top:122px;width:30px">194</div>
<div class="c" style="left:106px;top:122px;width:30px">6</div>
<div class="c" style="left:138px;top:122px;width:118px">2.23606797749979</div>
<div class="c" style="left:42px;top:139px;width:30px">327</div>
<div class="c" style="left:74px;top:139px;width:30px">194</div>
<div class="c" style="left:106px;top:139px;width:30px">7</div>
<div class="c" style="left:138px;top:139px;width:118px">2</div>
<div class="c" style="left:42px;top:156px;width:30px">325</div>
<div class="c" style="left:74px;top:156px;width:30px">193</div>
<div class="c" style="left:106px;top:156px;width:30px">8</div>
<div class="c" style="left:138px;top:156px;width:118px">2.23606797749979</div>
<div class="c" style="left:42px;top:173px;width:30px">323</div>
<div class="c" style="left:74px;top:173px;width:30px">193</div>
<div class="c" style="left:106px;top:173px;width:30px">9</div>
<div class="c" style="left:138px;top:173px;width:118px">2</div>
<div class="c" style="left:42px;top:190px;width:30px">322</div>
<div class="c" style="left:74px;top:190px;width:30px">192</div>
<div class="c" style="left:106px;top:190px;width:30px">10</div>
<div class="c" style="left:138px;top:190px;width:118px">1.4142135623731</div>
<div class="c" style="left:258px;top:190px;width:118px">1.29674883474569</div>
<div class="c" style="left:42px;top:207px;width:30px">321</div>
<div class="c" style="left:74px;top:207px;width:30px">192</div>
<div class="c" style="left:106px;top:207px;width:30px">11</div>
<div class="c" style="left:138px;top:207px;width:118px">1</div>
<div class="c" style="left:258px;top:207px;width:118px">1.34674883474569</div>
<div class="c" style="left:42px;top:224px;width:30px">322</div>
<div class="c" style="left:74px;top:224px;width:30px">193</div>
<div class="c" style="left:106px;top:224px;width:30px">12</div>
<div class="c" style="left:138px;top:224px;width:118px">1.4142135623731</div>
<div class="c" style="left:258px;top:224px;width:118px">1.2849454358707</div>
<div class="c" style="left:42px;top:241px;width:30px">322</div>
<div class="c" style="left:74px;top:241px;width:30px">193</div>
<div class="c" style="left:106px;top:241px;width:30px">13</div>
<div class="c" style="left:138px;top:241px;width:118px">0</div>
<div class="c" style="left:258px;top:241px;width:118px">1.2849454358707</div>
<div class="c" style="left:42px;top:258px;width:30px">322</div>
<div class="c" style="left:74px;top:258px;width:30px">193</div>
<div class="c" style="left:106px;top:258px;width:30px">14</div>
<div class="c" style="left:138px;top:258px;width:118px">0</div>
<div class="c" style="left:258px;top:258px;width:118px">1.17683155286228</div>
<div class="c" style="left:42px;top:275px;width:30px">323</div>
<div class="c" style="left:74px;top:275px;width:30px">193</div>
<div class="c" style="left:106px;top:275px;width:30px">15</div>
<div class="c" style="left:138px;top:275px;width:118px">1</div>
<div class="c" style="left:258px;top:275px;width:118px">1.19754223098093</div>
<div class="c" style="left:42px;top:292px;width:30px">323</div>
<div class="c" style="left:74px;top:292px;width:30px">192</div>
<div class="c" style="left:106px;top:292px;width:30px">16</div>
<div class="c" style="left:138px;top:292px;width:118px">1</div>
<div class="c" style="left:258px;top:292px;width:118px">1.19754223098093</div>
<div class="c" style="left:42px;top:309px;width:30px">323</div>
<div class="c" style="left:74px;top:309px;width:30px">193</div>
<div class="c" style="left:106px;top:309px;width:30px">17</div>
<div class="c" style="left:138px;top:309px;width:118px">1</div>
<div class="c" style="left:258px;top:309px;width:118px">1.19754223098093</div>
<div class="c" style="left:42px;top:326px;width:30px">323</div>
<div class="c" style="left:74px;top:326px;width:30px">193</div>
<div class="c" style="left:106px;top:326px;width:30px">18</div>
<div class="c" style="left:138px;top:326px;width:118px">0</div>
<div class="c" style="left:258px;top:326px;width:118px">1.36680047133766</div>
<div class="c" style="left:42px;top:343px;width:30px">322</div>
<div class="c" style="left:74px;top:343px;width:30px">193</div>
<div class="c" style="left:106px;top:343px;width:30px">19</div>
<div class="c" style="left:138px;top:343px;width:118px">1</div>
<div class="c" style="left:258px;top:343px;width:118px">1.7266961290655</div>
<div class="c" style="left:42px;top:360px;width:30px">323</div>
<div class="c" style="left:74px;top:360px;width:30px">193</div>
<div class="c" style="left:106px;top:360px;width:30px">20</div>
<div class="c" style="left:138px;top:360px;width:118px">1</div>
<div class="c" style="left:258px;top:360px;width:118px">2.08767335193014</div>
<div class="c" style="left:42px;top:377px;width:30px">323</div>
<div class="c" style="left:74px;top:377px;width:30px">192</div>
<div class="c" style="left:106px;top:377px;width:30px">21</div>
<div class="c" style="left:138px;top:377px;width:118px">1</div>
<div class="c" style="left:258px;top:377px;width:118px">2.36696267381149</div>
<div class="c" style="left:42px;top:394px;width:30px">323</div>
<div class="c" style="left:74px;top:394px;width:30px">193</div>
<div class="c" style="left:106px;top:394px;width:30px">22</div>
<div class="c" style="left:138px;top:394px;width:118px">1</div>
<div class="c" style="left:258px;top:394px;width:118px">2.63319043982833</div>
<div class="c" style="left:42px;top:411px;width:30px">323</div>
<div class="c" style="left:74px;top:411px;width:30px">192</div>
<div class="c" style="left:106px;top:411px;width:30px">23</div>
<div class="c" style="left:138px;top:411px;width:118px">1</div>
<div class="c" style="left:258px;top:411px;width:118px">2.81247976170967</div>
<div class="c" style="left:42px;top:428px;width:30px">324</div>
<div class="c" style="left:74px;top:428px;width:30px">191</div>
<div class="c" style="left:106px;top:428px;width:30px">24</div>
<div class="c" style="left:138px;top:428px;width:118px">1.4142135623731</div>
<div class="c" style="left:258px;top:428px;width:118px">3.10402735645194</div>
<div class="c" style="left:42px;top:445px;width:30px">326</div>
<div class="c" style="left:74px;top:445px;width:30px">190</div>
<div class="c" style="left:106px;top:445px;width:30px">25</div>
<div class="c" style="left:138px;top:445px;width:118px">2.23606797749979</div>
<div class="c" style="left:258px;top:445px;width:118px">3.49453984024727</div>
<div class="c" style="left:42px;top:462px;width:30px">328</div>
<div class="c" style="left:74px;top:462px;width:30px">189</div>
<div class="c" style="left:106px;top:462px;width:30px">26</div>
<div class="c" style="left:138px;top:462px;width:118px">2.23606797749979</div>
<div class="c" style="left:258px;top:462px;width:118px">3.76076760626411</div>
<div class="c" style="left:42px;top:479px;width:30px">333</div>
<div class="c" style="left:74px;top:479px;width:30px">187</div>
<div class="c" style="left:106px;top:479px;width:30px">27</div>
<div class="c" style="left:138px;top:479px;width:118px">5.3851648071345</div>
<div class="c" style="left:258px;top:479px;width:118px">3.89104517003731</div>
<div class="c" style="left:42px;top:496px;width:30px">341</div>
<div class="c" style="left:74px;top:496px;width:30px">182</div>
<div class="c" style="left:106px;top:496px;width:30px">28</div>
<div class="c" style="left:138px;top:496px;width:118px">9.4339811320566</div>
<div class="c" style="left:258px;top:496px;width:118px">3.9528485689123</div>
<div class="c" style="left:42px;top:513px;width:30px">350</div>
<div class="c" style="left:74px;top:513px;width:30px">180</div>
<div class="c" style="left:106px;top:513px;width:30px">29</div>
<div class="c" style="left:138px;top:513px;width:118px">9.21954445729289</div>
<div class="c" style="left:258px;top:513px;width:118px">4.15900385019318</div>
<div class="c" style="left:42px;top:530px;width:30px">357</div>
<div class="c" style="left:74px;top:530px;width:30px">180</div>
<div class="c" style="left:106px;top:530px;width:30px">30</div>
<div class="c" style="left:138px;top:530px;width:118px">7</div>
<div class="c" style="left:258px;top:530px;width:118px">4.3782620905499</div>
<div class="c" style="left:42px;top:547px;width:30px">363</div>
<div class="c" style="left:74px;top:547px;width:30px">178</div>
<div class="c" style="left:106px;top:547px;width:30px">31</div>
<div class="c" style="left:138px;top:547px;width:118px">6.32455532033676</div>
<div class="c" style="left:258px;top:547px;width:118px">4.6282620905499</div>
<div class="c" style="left:42px;top:564px;width:30px">367</div>
<div class="c" style="left:74px;top:564px;width:30px">175</div>
<div class="c" style="left:106px;top:564px;width:30px">32</div>
<div class="c" style="left:138px;top:564px;width:118px">5</div>
<div class="c" style="left:258px;top:564px;width:118px">4.98137497796483</div>
<div class="c" style="left:42px;top:581px;width:30px">372</div>
<div class="c" style="left:74px;top:581px;width:30px">172</div>
<div class="c" style="left:106px;top:581px;width:30px">33</div>
<div class="c" style="left:138px;top:581px;width:118px">5.8309518948453</div>
<div class="c" style="left:258px;top:581px;width:118px">5.28137497796483</div>
<div class="c" style="left:42px;top:598px;width:30px">378</div>
<div class="c" style="left:74px;top:598px;width:30px">167</div>
<div class="c" style="left:106px;top:598px;width:30px">34</div>
<div class="c" style="left:138px;top:598px;width:118px">7.81024967590665</div>
<div class="c" style="left:258px;top:598px;width:118px">5.50063321832156</div>
<div class="c" style="left:42px;top:615px;width:30px">384</div>
<div class="c" style="left:74px;top:615px;width:30px">165</div>
<div class="c" style="left:106px;top:615px;width:30px">35</div>
<div class="c" style="left:138px;top:615px;width:118px">6.32455532033676</div>
<div class="c" style="left:258px;top:615px;width:118px">5.5799225402029</div>
<div class="c" style="left:42px;top:632px;width:30px">386</div>
<div class="c" style="left:74px;top:632px;width:30px">162</div>
<div class="c" style="left:106px;top:632px;width:30px">36</div>
<div class="c" style="left:138px;top:632px;width:118px">3.60555127546399</div>
<div class="c" style="left:258px;top:632px;width:118px">5.62623302433633</div>
<div class="c" style="left:42px;top:649px;width:30px">387</div>
<div class="c" style="left:74px;top:649px;width:30px">160</div>
<div class="c" style="left:106px;top:649px;width:30px">37</div>
<div class="c" style="left:138px;top:649px;width:118px">2.23606797749979</div>
<div class="c" style="left:258px;top:649px;width:118px">5.81856775197625</div>
<div class="c" style="left:42px;top:666px;width:30px">388</div>
<div class="c" style="left:74px;top:666px;width:30px">156</div>
<div class="c" style="left:106px;top:666px;width:30px">38</div>
<div class="c" style="left:138px;top:666px;width:118px">4.12310562561766</div>
<div class="c" style="left:258px;top:666px;width:118px">5.84930951161953</div>
<div class="c" style="left:42px;top:683px;width:30px">390</div>
<div class="c" style="left:74px;top:683px;width:30px">151</div>
<div class="c" style="left:106px;top:683px;width:30px">39</div>
<div class="c" style="left:138px;top:683px;width:118px">5.3851648071345</div>
<div class="c" style="left:258px;top:683px;width:118px">5.7776104550167</div>
<div class="c" style="left:42px;top:700px;width:30px">390</div>
<div class="c" style="left:74px;top:700px;width:30px">145</div>
<div class="c" style="left:106px;top:700px;width:30px">40</div>
<div class="c" style="left:138px;top:700px;width:118px">6</div>
<div class="c" style="left:258px;top:700px;width:118px">5.7776104550167</div>
<div class="c" style="left:42px;top:717px;width:30px">389</div>
<div class="c" style="left:74px;top:717px;width:30px">137</div>
<div class="c" style="left:106px;top:717px;width:30px">41</div>
<div class="c" style="left:138px;top:717px;width:118px">8.06225774829855</div>
<div class="c" style="left:258px;top:717px;width:118px">5.73174858153161</div>
<div class="c" style="left:42px;top:734px;width:30px">389</div>
<div class="c" style="left:74px;top:734px;width:30px">130</div>
<div class="c" style="left:106px;top:734px;width:30px">42</div>
<div class="c" style="left:138px;top:734px;width:118px">7</div>
<div class="c" style="left:258px;top:734px;width:118px">5.67047179119441</div>
<div class="c" style="left:42px;top:751px;width:30px">391</div>
<div class="c" style="left:74px;top:751px;width:30px">125</div>
<div class="c" style="left:106px;top:751px;width:30px">43</div>
<div class="c" style="left:138px;top:751px;width:118px">5.3851648071345</div>
<div class="c" style="left:258px;top:751px;width:118px">5.57858567420283</div>
<div class="c" style="left:42px;top:768px;width:30px">391</div>
<div class="c" style="left:74px;top:768px;width:30px">122</div>
<div class="c" style="left:106px;top:768px;width:30px">44</div>
<div class="c" style="left:138px;top:768px;width:118px">3</div>
<div class="c" style="left:258px;top:768px;width:118px">5.44515196246898</div>
<div class="c" style="left:42px;top:785px;width:30px">390</div>
<div class="c" style="left:74px;top:785px;width:30px">119</div>
<div class="c" style="left:106px;top:785px;width:30px">45</div>
<div class="c" style="left:138px;top:785px;width:118px">3.16227766016838</div>
<div class="c" style="left:258px;top:785px;width:118px">5.15463947867365</div>
<div class="c" style="left:42px;top:802px;width:30px">389</div>
<div class="c" style="left:74px;top:802px;width:30px">113</div>
<div class="c" style="left:106px;top:802px;width:30px">46</div>
<div class="c" style="left:138px;top:802px;width:118px">6.08276253029822</div>
<div class="c" style="left:258px;top:802px;width:118px">4.83841171265681</div>
<div class="c" style="left:42px;top:819px;width:30px">388</div>
<div class="c" style="left:74px;top:819px;width:30px">107</div>
<div class="c" style="left:106px;top:819px;width:30px">47</div>
<div class="c" style="left:138px;top:819px;width:118px">6</div>
<div class="c" style="left:258px;top:819px;width:118px">4.53812441438801</div>
<div class="abs" style="left:41px;top:19px;width:29px;height:14px;border:2px solid #000"></div>
<div class="abs" style="left:71px;top:34px;width:5px;height:5px;background:#000"></div>
</div>
<div id="bottom">
<!-- vertical scrollbar -->
<div class="abs" style="left:1792px;top:172px;width:12px;height:824px;background:#cfd0d2"></div>
<div class="abs" style="left:1792px;top:172px;width:12px;height:9px;background:#c3c5c7"></div>
<div class="abs" style="left:1795px;top:174px;width:6px;height:1.5px;background:#1e1e1e"></div>
<div class="abs" style="left:1795px;top:182px;width:6px;height:33px;background:#8b8c8e;border-radius:3px"></div>
<!-- horizontal scrollbar -->
<div class="abs" style="left:0;top:996px;width:1792px;height:12px;background:#cfd0d2"></div>
<div class="abs" style="left:5px;top:999px;width:847px;height:6px;background:#8b8c8e;border-radius:3px"></div>
<div class="abs" style="left:1786px;top:996px;width:6px;height:12px;background:#c4c5c7"></div>
<div class="abs" style="left:1788px;top:999px;width:1px;height:6px;background:#2e2e2e"></div>
<div class="abs" style="left:1792px;top:996px;width:12px;height:12px;background:#f5f6f7"></div>
<!-- sheet tab bar -->
<div class="abs" style="left:0;top:1008px;width:1804px;height:26px;background:#f5f6f7"></div>
<svg style="left:12px;top:1011px" width="126" height="18" viewBox="0 0 126 18">
<g fill="#b7b9bb"><rect x="3" y="1" width="1.6" height="15"/><path d="M12 1 V16 L4.8 8.5 Z"/><path d="M36 1 V16 L28 8.5 Z"/><path d="M52 1 V16 L60 8.5 Z"/><path d="M76 1 V16 L83.2 8.5 Z"/><rect x="85.4" y="1" width="1.6" height="15"/></g>
<path d="M113.5 1 V17 M105.5 9 H121.5" stroke="#2e2e2e" stroke-width="2.6" fill="none"/>
</svg>
<div class="abs" style="left:144px;top:1008px;width:166px;height:22px;background:#fff"></div>
<div class="abs" style="left:144px;top:1030px;width:166px;height:3px;background:#9b9c9e"></div>
<div class="t" style="left:157.5px;top:1014px;font-size:12.2px;color:#2e3436">cut_video.mp4_processed</div>
<!-- status bar -->
<div class="abs" style="left:0;top:1033px;width:1848px;height:1px;background:#c6c7c8"></div>
<div class="abs" style="left:0;top:1034px;width:1848px;height:20px;background:#f5f6f7"></div>
<div class="t" style="left:11px;top:1038px;font-size:12.4px;color:#2e3436">Sheet 1 of 1</div>
<div class="sep" style="left:290px;top:1037px;height:14px"></div>
<div class="sep" style="left:578px;top:1037px;height:14px"></div>
<div class="t" style="left:587px;top:1038px;font-size:12.4px;color:#2e3436">Default</div>
<div class="sep" style="left:850px;top:1037px;height:14px"></div>
<div class="t" style="left:967px;top:1038px;font-size:12.4px;color:#2e3436">English (UK)</div>
<div class="sep" style="left:1146px;top:1037px;height:14px"></div>
<div class="sep" style="left:1214px;top:1037px;height:14px"></div>
<svg style="left:1222px;top:1038px" width="16" height="12" viewBox="0 0 16 12"><path d="M2 1 H6 M4 1 V10 M2 10 H6" stroke="#555" stroke-width="0.9" fill="none"/><path d="M9 10.5 H14" stroke="#555" stroke-width="0.9"/></svg>
<div class="sep" style="left:1242px;top:1037px;height:14px"></div>
<svg style="left:1252px;top:1038px" width="14" height="12" viewBox="0 0 14 12"><rect x="0.5" y="0.5" width="12" height="10" fill="#e4e4e4" stroke="#9a9a9a"/><path d="M5 2 H8 V5 H10 L6.5 8.6 L3 5 H5 Z" fill="#3a3a3a"/></svg>
<div class="sep" style="left:1273px;top:1037px;height:14px"></div>
<div class="sep" style="left:1301px;top:1037px;height:14px"></div>
<div class="t" style="left:1418px;top:1038px;font-size:12.4px;color:#2e3436">Average: 335; Sum: 335</div>
<div class="sep" style="left:1660px;top:1037px;height:14px"></div>
<svg style="left:1668px;top:1037px" width="130" height="16" viewBox="0 0 130 16">
<path d="M2 8 H11" stroke="#8a8a8a" stroke-width="1"/><path d="M16 8 H112" stroke="#9a9a9a" stroke-width="1"/>
<circle cx="63.5" cy="8" r="4.2" fill="#f8f8f8" stroke="#8a8a8a" stroke-width="1"/>
<path d="M118 8 H127 M122.5 3.5 V12.5" stroke="#8a8a8a" stroke-width="1"/>
</svg>
<div class="sep" style="left:1803px;top:1037px;height:14px"></div>
<div class="t" style="left:1811px;top:1038px;font-size:12.4px;color:#2e3436">100%</div>
</div>

<div id="leftedge"></div>

<div id="sidebar">
<div class="abs" style="left:1804px;top:141px;width:44px;height:893px;background:#f5f6f7"></div>
<div class="abs" style="left:1804px;top:141px;width:1px;height:893px;background:#adafb1"></div>
<div class="abs" style="left:1810px;top:141px;width:1px;height:893px;background:#b9bbbd"></div>
<div class="abs" style="left:1804px;top:141px;width:44px;height:1px;background:#b4b6b8"></div>
<div class="abs" style="left:1805px;top:141px;width:5px;height:893px;background:#f9f9fa"></div>
<div class="abs" style="left:1804.5px;top:550px;width:6px;height:73px;background:#979997"></div>
<svg style="left:1805px;top:582px" width="6" height="10" viewBox="0 0 6 10"><path d="M0.4 0.6 L5.4 4.8 L0.4 9 Z" fill="#f2f2f2"/></svg>
<!-- gear -->
<svg style="left:1819px;top:149px" width="24" height="24" viewBox="0 0 24 24"><g transform="translate(12 12.5)"><g fill="#d6d6d6" stroke="#b9b9b9" stroke-width="0.9"><rect x="-2.3" y="-11" width="4.6" height="4" rx="1.2" transform="rotate(0)"/><rect x="-2.3" y="-11" width="4.6" height="4" rx="1.2" transform="rotate(45)"/><rect x="-2.3" y="-11" width="4.6" height="4" rx="1.2" transform="rotate(90)"/><rect x="-2.3" y="-11" width="4.6" height="4" rx="1.2" transform="rotate(135)"/><rect x="-2.3" y="-11" width="4.6" height="4" rx="1.2" transform="rotate(180)"/><rect x="-2.3" y="-11" width="4.6" height="4" rx="1.2" transform="rotate(225)"/><rect x="-2.3" y="-11" width="4.6" height="4" rx="1.2" transform="rotate(270)"/><rect x="-2.3" y="-11" width="4.6" height="4" rx="1.2" transform="rotate(315)"/></g><circle r="8.6" fill="#dadada" stroke="#bcbcbc" stroke-width="0.8"/><circle r="5.6" fill="#c8c8c8" stroke="#b4b4b4" stroke-width="0.6"/><circle r="2.8" fill="#f7f7f7" stroke="#b9b9b9" stroke-width="0.6"/></g></svg>
<div class="abs" style="left:1820px;top:180px;width:22px;height:1px;background:#dcdcdc"></div>
<!-- properties (active) -->
<div class="abs" style="left:1815px;top:184px;width:32px;height:32px;border:1px solid #cfd0d2;border-radius:4px;box-sizing:border-box;background:#f7f8f9"></div>
<svg style="left:1821px;top:190px" width="21" height="20" viewBox="0 0 21 20"><rect x="0.5" y="0.5" width="19.4" height="18.6" fill="#e9e9e9" stroke="#adadad"/><rect x="3" y="6.2" width="14.4" height="7.4" rx="3.7" fill="#3584e4"/><circle cx="13.6" cy="9.9" r="2.9" fill="#fff"/></svg>
<!-- styles -->
<svg style="left:1819px;top:224px" width="26" height="24" viewBox="0 0 26 24"><path d="M1.5 16.5 L8.6 1.5 H11.6 L18.6 16.5 H15.4 L13.8 12.8 H6.2 L4.6 16.5 Z M7.4 10.2 H12.6 L10 4.2 Z" fill="#454545"/><path d="M24.6 5 L17.4 14.6 L15.6 13.4 Z" fill="#c87a2a"/><path d="M17.4 14.6 L15.6 13.4 Q12.6 15.6 10.6 20.6 Q15.6 19.6 17.4 14.6 Z" fill="#e84aa8"/></svg>
<!-- gallery -->
<svg style="left:1819px;top:259px" width="24" height="22" viewBox="0 0 24 22">
<rect x="1.5" y="1.5" width="20" height="16" transform="rotate(-8 12 10)" fill="#f2f2f2" stroke="#b5b5b5"/>
<rect x="2.5" y="3.5" width="20" height="16" fill="#f2f2f2" stroke="#b5b5b5"/><rect x="4" y="5" width="17" height="13" fill="#2f8fe0"/><rect x="4" y="10" width="17" height="3" fill="#8fd0f2"/><rect x="4" y="12.4" width="17" height="5.6" fill="#f2c070"/>
<path d="M8.5 12.4 L9.2 14 L11 14.2 L9.7 15.2 L10.1 17 L8.5 16 L6.9 17 L7.3 15.2 L6 14.2 L7.8 14 Z" fill="#e32a1c"/></svg>
<!-- navigator -->
<svg style="left:1819px;top:293px" width="24" height="24" viewBox="0 0 24 24"><circle cx="12" cy="12" r="10.6" fill="#3c4a6c" stroke="#b4b4b4" stroke-width="2"/><circle cx="12" cy="12" r="9.4" fill="none" stroke="#4a566e" stroke-width="0.8"/>
<path d="M12 12 L15.6 3.4 L13.6 12 Z M12 12 L20.6 15.6 L12 13.6 Z" fill="#e8e8e8"/><path d="M12 12 L3.6 8.6 L12 10.6 Z M12 12 L8.6 20.6 L10.6 12 Z" fill="#e8e8e8"/><path d="M12 12 L18.6 5 L13.2 12.4 Z" fill="#e8283c"/><path d="M12 12 L4.4 10 L12 13.4 Z" fill="#e8283c"/><path d="M12 12 L7 19.6 L11 12.6 Z" fill="#d8d8d8"/></svg>
<!-- functions -->
<div class="t" style="left:1822.5px;top:329.5px;font-size:22px;color:#3a3a3a;font-weight:600">f</div>
<div class="t" style="left:1830.5px;top:339.5px;font-size:11px;color:#3a3a3a;letter-spacing:-0.5px;font-weight:600">(x)</div>
<div class="abs" style="left:1804px;top:141px;width:44px;height:1px;background:#b4b6b8"></div>
</div>

<div id="pdfwin" style="position:absolute;left:712px;top:173px;width:949px;height:761px;background:#f5f6f7;border-radius:8px 8px 0 0;box-shadow:0 0 0 1px rgba(0,0,0,0.22),0 5px 16px 2px rgba(0,0,0,0.42)">
<div class="abs" style="left:0;top:0;width:949px;height:41px;background:#2c2a2a;border-radius:8px 8px 0 0;box-sizing:border-box;border-bottom:1px solid #1d1b1b;border-top:1px solid #454242"></div>
<div class="abs" style="left:6px;top:5px;width:30px;height:30px;box-sizing:border-box;background:#403d3d;border:1px solid #252323;border-radius:5px"></div>
<svg style="left:13px;top:12px" width="16" height="16" viewBox="0 0 16 16"><rect x="1.5" y="2.5" width="13" height="10.6" fill="none" stroke="#f2f2f2" stroke-width="1.4"/><rect x="1.5" y="2.5" width="3.6" height="10.6" fill="#bdbdbd" stroke="#f2f2f2" stroke-width="1.4"/></svg>
<div class="abs" style="left:42px;top:5px;width:83px;height:30px;box-sizing:border-box;background:#f6f7f7;border:1px solid #252323;border-radius:5px;overflow:hidden"><div class="abs" style="left:0;top:0;width:32px;height:28px;background:#fff;border-right:1px solid #3a3838"></div></div>
<div class="t" style="left:58px;top:12px;font-size:15px;color:#1d1d1d">1</div>
<div class="t" style="left:83.5px;top:12px;font-size:15px;color:#9a9c9c">of 1</div>
<div class="abs" style="left:131px;top:5px;width:30px;height:30px;box-sizing:border-box;background:#403d3d;border:1px solid #252323;border-radius:5px"></div>
<svg style="left:138px;top:12px" width="16" height="16" viewBox="0 0 16 16"><path d="M1 14.6 L2.4 10.6 L11 2 Q12 1.2 13 2.2 L13.6 2.8 Q14.4 3.8 13.6 4.6 L5 13.2 Z" fill="#f0f0f0"/><path d="M8.6 13.6 H15 M10.6 11.6 H15 M12.4 9.6 H15" stroke="#f0f0f0" stroke-width="0.9"/></svg>
<div class="t" style="left:0;top:11.5px;width:949px;text-align:center;font-size:15.1px;font-weight:bold;color:#fff">cut_video.mp4.pdf</div>
<div class="abs" style="left:654px;top:5px;width:91px;height:30px;box-sizing:border-box;background:#fff;border:1px solid #252323;border-radius:5px"></div>
<div class="t" style="left:664.5px;top:12px;font-size:15px;color:#1d1d1d">150.6%</div>
<svg style="left:722px;top:17px" width="10" height="6" viewBox="0 0 10 6"><path d="M0.4 0.4 H9.6 L5 5.6 Z" fill="#5a5a5a"/></svg>
<div class="abs" style="left:750px;top:5px;width:30px;height:30px;box-sizing:border-box;background:#403d3d;border:1px solid #252323;border-radius:5px"></div>
<svg style="left:757px;top:12px" width="16" height="16" viewBox="0 0 16 16"><circle cx="7" cy="7" r="5.4" fill="none" stroke="#f0f0f0" stroke-width="1.3"/><path d="M10.8 10.8 L14.4 14.4" stroke="#f0f0f0" stroke-width="1.5"/></svg>
<div class="abs" style="left:785px;top:5px;width:30px;height:30px;box-sizing:border-box;background:#403d3d;border:1px solid #252323;border-radius:5px"></div>
<svg style="left:792px;top:12px" width="16" height="16" viewBox="0 0 16 16"><path d="M3 3.5 H13 M3 8 H13 M3 12.5 H13" stroke="#f0f0f0" stroke-width="1.2"/></svg>
<div class="abs" style="left:841px;top:22px;width:9px;height:1px;background:#f0f0f0"></div>
<div class="abs" style="left:881px;top:16px;width:9px;height:8px;box-sizing:border-box;border:1px solid #f0f0f0"></div>
<svg style="left:915px;top:10px" width="21" height="21" viewBox="0 0 21 21"><circle cx="10.3" cy="10" r="10" fill="#e95420"/><path d="M6.6 6.3 L14 13.7 M14 6.3 L6.6 13.7" stroke="#fff" stroke-width="1.5"/></svg>
<div class="abs" style="left:12px;top:49px;width:926px;height:695px;background:#fff;box-shadow:0 1.5px 4px rgba(0,0,0,0.3)"></div>
</div>
<svg style="left:0;top:0;will-change:transform" width="1848" height="1054" viewBox="0 0 1848 1054">
<g font-family="'DejaVu Sans','Liberation Sans',sans-serif" fill="#000">
<text x="1198.2" y="292.5" font-size="24.1" text-anchor="middle">/home/srao/Documents/animapp_desktop/sample_videos/cut_video.mp4</text>
<path d="M899.70 840.2 V847.4" stroke="#000" stroke-width="1.6"/>
<text x="899.70" y="870" font-size="20.1" text-anchor="middle">50</text>
<path d="M980.60 840.2 V847.4" stroke="#000" stroke-width="1.6"/>
<text x="980.60" y="870" font-size="20.1" text-anchor="middle">100</text>
<path d="M1061.50 840.2 V847.4" stroke="#000" stroke-width="1.6"/>
<text x="1061.50" y="870" font-size="20.1" text-anchor="middle">150</text>
<path d="M1142.40 840.2 V847.4" stroke="#000" stroke-width="1.6"/>
<text x="1142.40" y="870" font-size="20.1" text-anchor="middle">200</text>
<path d="M1223.30 840.2 V847.4" stroke="#000" stroke-width="1.6"/>
<text x="1223.30" y="870" font-size="20.1" text-anchor="middle">250</text>
<path d="M1304.20 840.2 V847.4" stroke="#000" stroke-width="1.6"/>
<text x="1304.20" y="870" font-size="20.1" text-anchor="middle">300</text>
<path d="M1385.10 840.2 V847.4" stroke="#000" stroke-width="1.6"/>
<text x="1385.10" y="870" font-size="20.1" text-anchor="middle">350</text>
<path d="M1466.00 840.2 V847.4" stroke="#000" stroke-width="1.6"/>
<text x="1466.00" y="870" font-size="20.1" text-anchor="middle">400</text>
<path d="M1546.90 840.2 V847.4" stroke="#000" stroke-width="1.6"/>
<text x="1546.90" y="870" font-size="20.1" text-anchor="middle">450</text>
<path d="M839.7 816.20 H832.6" stroke="#000" stroke-width="1.6"/>
<text x="825.4" y="824.00" font-size="20.1" text-anchor="end">50</text>
<path d="M839.7 749.75 H832.6" stroke="#000" stroke-width="1.6"/>
<text x="825.4" y="757.55" font-size="20.1" text-anchor="end">75</text>
<path d="M839.7 683.30 H832.6" stroke="#000" stroke-width="1.6"/>
<text x="825.4" y="691.10" font-size="20.1" text-anchor="end">100</text>
<path d="M839.7 616.85 H832.6" stroke="#000" stroke-width="1.6"/>
<text x="825.4" y="624.65" font-size="20.1" text-anchor="end">125</text>
<path d="M839.7 550.40 H832.6" stroke="#000" stroke-width="1.6"/>
<text x="825.4" y="558.20" font-size="20.1" text-anchor="end">150</text>
<path d="M839.7 483.95 H832.6" stroke="#000" stroke-width="1.6"/>
<text x="825.4" y="491.75" font-size="20.1" text-anchor="end">175</text>
<path d="M839.7 417.50 H832.6" stroke="#000" stroke-width="1.6"/>
<text x="825.4" y="425.30" font-size="20.1" text-anchor="end">200</text>
<path d="M839.7 351.05 H832.6" stroke="#000" stroke-width="1.6"/>
<text x="825.4" y="358.85" font-size="20.1" text-anchor="end">225</text>
<text x="1198.6" y="897.3" font-size="20.1" text-anchor="middle">x</text>
</g>
<polyline points="875.9,448.1 878.8,440.2 881.9,433.1 885.1,425.6 888.4,417.6 891.7,411.4 895.5,404.7 899.3,395.5 903.0,385.9 906.4,380.5 907.0,376.7 906.8,371.7 906.4,370.4 907.0,369.4 908.0,369.5 908.2,371.3 907.3,372.1 907.8,374.2 910.1,376.7 914.3,380.1 917.0,380.5 915.8,384.2 918.1,388.0 915.3,389.2 913.5,393.4 917.6,398.6" fill="none" stroke="#1f77b4" stroke-width="2.85" stroke-linejoin="round" stroke-linecap="square"/>
<polyline points="908.5,376.3 911.4,380.9 908.0,380.9 911.1,392.6 910.0,381.9 913.5,392.2 912.8,381.3 915.1,388.4" fill="none" stroke="#1f77b4" stroke-width="2.85" stroke-linejoin="round" stroke-linecap="square"/>
<polyline points="913.5,393.8 910.1,396.1 905.9,396.1 905.9,401.8 910.5,405.9 915.1,410.1 916.8,409.1 917.0,413.5 919.7,412.0 920.3,416.8 922.7,420.0 922.0,423.1 922.8,426.0 918.9,426.0 917.6,421.0 917.0,414.3 918.5,418.5 919.5,423.5 920.8,418.5 921.4,424.3" fill="none" stroke="#1f77b4" stroke-width="2.85" stroke-linejoin="round" stroke-linecap="square"/>
<polyline points="915.8,417.6 913.5,421.8 910.8,423.5 911.6,428.7 908.0,423.9 904.7,419.7 900.5,422.5 888.0,422.5" fill="none" stroke="#1f77b4" stroke-width="2.85" stroke-linejoin="round" stroke-linecap="square"/>
<polyline points="885.1,426.0 887.6,428.1 885.1,428.7" fill="none" stroke="#1f77b4" stroke-width="2.85" stroke-linejoin="round" stroke-linecap="square"/>
<polyline points="884.2,429.3 885.1,437.7 886.7,448.1" fill="none" stroke="#1f77b4" stroke-width="2.85" stroke-linejoin="round" stroke-linecap="square"/>
<polyline points="965.8,465.6 970.0,459.4 974.6,455.2 980.1,446.0 988.4,433.0 1001.8,422.2 1013.5,415.9 1021.8,413.4 1004.3,411.3 1000.1,412.2 990.5,414.7 985.1,412.2 988.4,405.9 992.2,403.8 1004.3,406.7 1003.4,408.8 1006.8,410.9 1015.1,412.6 1014.7,406.7 1018.5,408.8 1022.2,412.2 1024.7,415.1 1027.7,405.9 1031.0,403.8 1035.6,411.7 1040.2,419.3 1048.6,425.1 1051.9,431.0 1058.6,432.6 1067.8,435.6 1082.8,443.9 1086.1,449.3 1114.1,442.7" fill="none" stroke="#1f77b4" stroke-width="2.85" stroke-linejoin="round" stroke-linecap="square"/>
<polyline points="1038.1,409.2 1038.9,400.9 1040.2,404.2 1044.4,403.8 1047.7,406.7 1058.6,411.3 1068.6,416.8 1070.4,420.1 1067.1,423.0 1060.7,422.8 1055.2,416.8 1049.0,412.2 1050.6,417.6 1047.7,417.8 1040.2,413.0" fill="none" stroke="#1f77b4" stroke-width="2.85" stroke-linejoin="round" stroke-linecap="square"/>
<polyline points="1048.6,421.8 1054.4,423.4 1060.3,428.0 1065.7,428.0 1065.7,431.0 1058.6,430.1 1051.9,425.5 1049.4,425.1 1051.9,431.0" fill="none" stroke="#1f77b4" stroke-width="2.85" stroke-linejoin="round" stroke-linecap="square"/>
<polyline points="1060.7,422.8 1062.3,426.8 1058.6,430.1" fill="none" stroke="#1f77b4" stroke-width="2.85" stroke-linejoin="round" stroke-linecap="square"/>
<polyline points="1055.2,416.8 1058.6,423.4 1066.1,419.3 1067.1,423.0" fill="none" stroke="#1f77b4" stroke-width="2.85" stroke-linejoin="round" stroke-linecap="square"/>
<polyline points="974.6,455.6 976.3,456.9 978.0,468.1" fill="none" stroke="#1f77b4" stroke-width="2.85" stroke-linejoin="round" stroke-linecap="square"/>
<polyline points="1080.0,442.0 1083.1,444.5 1086.0,449.5 1096.3,446.6 1111.3,443.6 1129.5,441.1 1145.8,443.9 1157.0,449.1 1165.8,449.1 1176.5,446.4 1192.7,449.9 1209.0,452.6 1225.3,455.1 1236.6,457.6 1247.9,457.4 1255.4,459.9 1274.2,459.9 1283.6,454.9 1277.9,448.2 1275.4,441.4 1278.5,438.2 1281.7,430.1 1281.9,426.3 1280.2,422.8 1281.7,420.1 1286.4,417.3 1295.2,417.3 1300.5,420.3 1306.1,422.8 1311.0,422.8" fill="none" stroke="#1f77b4" stroke-width="2.85" stroke-linejoin="round" stroke-linecap="square"/>
<polyline points="1360.8,414.8 1359.2,420.2 1359.2,422.8 1357.6,430.8 1357.6,428.1 1354.4,430.8 1351.1,433.4 1347.9,433.4 1344.7,436.1 1341.4,436.1 1339.8,438.8 1338.2,438.8 1339.8,436.1 1341.4,436.1 1341.4,438.8 1343.0,441.4 1346.3,444.1 1349.5,446.7 1357.6,452.1 1370.5,465.3 1385.1,470.7 1396.4,470.7 1406.1,476.0 1412.6,484.0 1420.7,491.9 1430.4,505.2 1440.1,510.5 1443.3,518.5 1445.0,523.8 1446.6,534.5 1449.8,547.7 1449.8,563.7 1448.2,585.0 1448.2,603.6 1451.4,616.9 1451.4,624.8 1449.8,632.8 1448.2,648.7 1446.6,664.7" fill="none" stroke="#1f77b4" stroke-width="2.85" stroke-linejoin="round" stroke-linecap="square"/>
<polyline points="1290.0,417.6 1295.4,417.6 1305.5,422.6 1324.3,422.6 1328.8,427.6 1330.1,435.1 1332.6,436.8 1335.5,442.6 1336.4,446.8 1339.7,448.5 1340.1,456.8 1343.5,460.2 1347.6,473.5 1348.5,478.1" fill="none" stroke="#1f77b4" stroke-width="2.85" stroke-linejoin="round" stroke-linecap="square"/>
<polyline points="1340.1,456.8 1344.3,454.3 1350.6,457.3 1348.5,459.3 1348.9,478.1" fill="none" stroke="#1f77b4" stroke-width="2.85" stroke-linejoin="round" stroke-linecap="square"/>
<polyline points="1343.5,455.2 1345.1,465.2 1346.8,458.5 1348.5,473.5 1348.9,461.0" fill="none" stroke="#1f77b4" stroke-width="2.85" stroke-linejoin="round" stroke-linecap="square"/>
<polyline points="1348.5,478 1348.2,489.3 1350.8,508.1 1353.3,542.3" fill="none" stroke="#1f77b4" stroke-width="2.85" stroke-linejoin="round" stroke-linecap="square"/>
<polyline points="1463.5,390.0 1461.8,395.8 1459.3,402.5 1455.6,411.7 1451.8,412.1 1445.1,416.7 1443.5,420.1 1448.5,419.2 1456.0,419.7 1456.0,427.6 1454.7,436.8 1456.8,436.4 1456.0,441.0 1467.3,441.0 1468.9,435.5 1473.5,435.5 1475.2,438.5 1475.2,448.5 1476.9,449.7 1475.2,461.8 1476.9,462.7 1476.9,467.7 1474.4,471.9 1473.5,478.1" fill="none" stroke="#1f77b4" stroke-width="2.85" stroke-linejoin="round" stroke-linecap="square"/>
<polyline points="1399.2,400.9 1403.8,400.9 1406.3,406.3 1416.3,414.6 1417.6,406.3 1433.4,409.6 1433.9,405.9 1440.1,410.9 1445.1,417.2" fill="none" stroke="#1f77b4" stroke-width="2.85" stroke-linejoin="round" stroke-linecap="square"/>
<polyline points="1403.8,400.9 1399.2,400.9 1399.2,414.6 1409.2,425.1 1429.3,436.4 1435.9,435.9 1428.8,428.0 1423.4,415.9 1420.1,409.2 1418.4,406.3" fill="none" stroke="#1f77b4" stroke-width="2.85" stroke-linejoin="round" stroke-linecap="square"/>
<polyline points="1422.6,409.6 1430.9,420.5 1435.1,423.0 1440.1,431.8 1443.5,441.0 1444.7,448.5 1441.8,456.8 1443.5,463.1 1448.5,459.8 1455.2,459.3 1459.3,456.0 1463.5,448.5 1456.0,446.8 1462.7,444.3 1468.5,445.1 1469.8,449.3 1467.3,441.0" fill="none" stroke="#1f77b4" stroke-width="2.85" stroke-linejoin="round" stroke-linecap="square"/>
<polyline points="1439.3,428.0 1445.6,428.4 1450.2,423.0 1451.8,420.9 1439.3,428.0" fill="none" stroke="#1f77b4" stroke-width="2.85" stroke-linejoin="round" stroke-linecap="square"/>
<polyline points="1453.5,421.7 1454.7,430.1 1451.8,444.3 1450.2,449.3 1453.1,447.6 1453.5,465.2 1455.2,478.1" fill="none" stroke="#1f77b4" stroke-width="2.85" stroke-linejoin="round" stroke-linecap="square"/>
<polyline points="1463.5,448.5 1462.7,459.3 1465.2,469.4 1468.5,478.1" fill="none" stroke="#1f77b4" stroke-width="2.85" stroke-linejoin="round" stroke-linecap="square"/>
<polyline points="1465.2,460.2 1468.5,455.2 1473.5,451.0 1473.5,461.8 1465.2,462.0 1466.0,468.5 1476.0,468.5" fill="none" stroke="#1f77b4" stroke-width="2.85" stroke-linejoin="round" stroke-linecap="square"/>
<polyline points="1468.5,470.2 1470.2,478.1 1473.5,473.5 1481.1,475.2 1481.1,478.1" fill="none" stroke="#1f77b4" stroke-width="2.85" stroke-linejoin="round" stroke-linecap="square"/>
<polyline points="1454.3,470.0 1455.2,480.9 1459.3,494.2 1464.8,500.1 1469.4,497.6 1468.5,486.7 1468.1,470.0" fill="none" stroke="#1f77b4" stroke-width="2.85" stroke-linejoin="round" stroke-linecap="square"/>
<polyline points="1469.4,497.6 1469.8,507.6 1466.9,526.8 1461.0,542.7 1456.8,554.4 1456.0,558.1" fill="none" stroke="#1f77b4" stroke-width="2.85" stroke-linejoin="round" stroke-linecap="square"/>
<polyline points="1468.5,470.0 1468.1,475.0 1470.2,477.5 1472.7,472.5 1475.2,470.0" fill="none" stroke="#1f77b4" stroke-width="2.85" stroke-linejoin="round" stroke-linecap="square"/>
<polyline points="1475.2,475.8 1481.5,475.4 1480.6,479.6 1481.9,482.5 1479.4,486.7 1472.7,491.7 1470.6,488.0 1475.2,478.4 1475.2,475.8" fill="none" stroke="#1f77b4" stroke-width="2.85" stroke-linejoin="round" stroke-linecap="square"/>
<polyline points="1470.2,477.5 1469.4,486.7" fill="none" stroke="#1f77b4" stroke-width="2.85" stroke-linejoin="round" stroke-linecap="square"/>
<polyline points="1446.6,664.6 1448.4,666.5 1449.0,672.0" fill="none" stroke="#1f77b4" stroke-width="2.85" stroke-linejoin="round" stroke-linecap="square"/>
<polyline points="1462.8,540.0 1456.5,556.3 1456.8,561.3 1459.0,566.9 1456.5,571.3 1460.3,571.3 1456.5,587.6 1458.8,595.1 1456.5,613.9 1458.8,622.0 1455.9,637.7 1450.3,649.0 1449.0,672.0" fill="none" stroke="#1f77b4" stroke-width="2.85" stroke-linejoin="round" stroke-linecap="square"/>
<polyline points="1353.2,540.0 1353.2,542.5 1348.2,550.0 1348.2,566.3 1355.1,595.1 1352.5,607.6 1350.7,613.9 1349.4,615.2 1350.7,620.2 1351.3,626.4 1356.3,632.7 1360.1,631.4 1359.8,629.6" fill="none" stroke="#1f77b4" stroke-width="2.85" stroke-linejoin="round" stroke-linecap="square"/>
<polyline points="1350.7,618.9 1344.4,619.2 1340.0,629.6 1340.0,645.2 1343.8,672.0" fill="none" stroke="#1f77b4" stroke-width="2.85" stroke-linejoin="round" stroke-linecap="square"/>
<polyline points="1351.3,630.2 1349.4,633.9 1349.4,651.5 1351.3,657.1 1355.7,657.1 1356.9,654.0 1356.9,633.9 1355.7,632.1" fill="none" stroke="#1f77b4" stroke-width="2.85" stroke-linejoin="round" stroke-linecap="square"/>
<polyline points="1448.4,660.0 1448.4,672.5 1443.4,678.8 1441.5,685.7 1444.0,693.8 1450.3,707.6 1447.8,713.9 1437.7,730.1 1432.7,746.4 1430.2,747.1 1432.1,751.4 1435.2,762.7 1430.2,762.7 1435.8,766.5 1439.0,770.9 1437.1,778.4 1430.2,778.4 1429.6,780.9 1421.4,783.4 1411.4,789.0 1398.3,789.0 1395.1,792.0" fill="none" stroke="#1f77b4" stroke-width="2.85" stroke-linejoin="round" stroke-linecap="square"/>
<polyline points="1450.9,660.0 1450.9,670.0 1448.4,677.5 1449.0,685.1 1452.8,710.1 1455.3,735.2 1455.9,740.2 1452.1,753.9 1451.5,763.3 1455.3,763.3 1455.3,747.7 1457.8,743.9 1461.5,741.4 1464.0,742.0 1461.5,737.7 1459.7,727.6 1461.5,725.1 1471.6,731.4 1473.4,731.4 1473.4,756.5 1471.6,760.2 1465.3,763.3 1456.5,770.2 1446.5,780.3 1437.1,792.0" fill="none" stroke="#1f77b4" stroke-width="2.85" stroke-linejoin="round" stroke-linecap="square"/>
<polyline points="1341.9,660.0 1345.0,683.8 1348.8,690.7 1350.7,699.5 1346.3,703.2 1343.2,709.5 1337.5,720.1 1330.0,731.4" fill="none" stroke="#1f77b4" stroke-width="2.85" stroke-linejoin="round" stroke-linecap="square"/>
<polyline points="1345.7,705.1 1345.7,710.1 1338.8,720.1 1331.3,732.7" fill="none" stroke="#1f77b4" stroke-width="2.85" stroke-linejoin="round" stroke-linecap="square"/>
<polyline points="1346.3,703.2 1336.3,703.8 1330.0,707.0" fill="none" stroke="#1f77b4" stroke-width="2.85" stroke-linejoin="round" stroke-linecap="square"/>
<polyline points="1330.0,733.9 1335.6,731.4 1341.9,728.3 1359.4,733.9 1372.6,728.3 1385.1,753.9 1385.1,766.5 1390.1,792.0" fill="none" stroke="#1f77b4" stroke-width="2.85" stroke-linejoin="round" stroke-linecap="square"/>
<polyline points="1330.0,784.0 1353.8,784.0 1366.3,778.4 1390.1,773.4 1402.0,778.4 1402.0,784.0 1395.1,787.1 1395.1,792.0" fill="none" stroke="#1f77b4" stroke-width="2.85" stroke-linejoin="round" stroke-linecap="square"/>
<polyline points="1398.3,788.9 1395.1,792.0 1395.4,795.8" fill="none" stroke="#1f77b4" stroke-width="2.85" stroke-linejoin="round" stroke-linecap="square"/>
<polyline points="1437.1,792.0 1431.5,800.1 1418.9,808.3 1406.4,813.9 1398.9,810.8 1387.6,810.8 1383.2,807.7 1383.2,799.5 1388.2,797.6 1390.8,788.9 1390.3,780.7" fill="none" stroke="#1f77b4" stroke-width="2.85" stroke-linejoin="round" stroke-linecap="square"/>
<polyline points="1115.0,660.0 1147.6,672.5 1155.7,672.5 1167.0,683.2 1176.4,683.2 1188.9,680.7 1197.7,677.5 1205.8,672.5 1217.7,680.7 1225.2,683.2 1233.4,683.2 1241.5,678.2 1254.1,678.2 1260.9,683.2 1277.2,683.2 1286.6,690.7 1286.6,696.3 1289.1,698.2 1296.6,701.3 1310.4,712.6 1328.0,731.4 1334.2,732.0 1341.0,729.5" fill="none" stroke="#1f77b4" stroke-width="2.85" stroke-linejoin="round" stroke-linecap="square"/>
<polyline points="1151.7,672.0 1155.1,681.3 1175.1,713.9 1183.9,723.9 1184.5,735.2 1187.7,745.2 1194.6,760.8 1198.3,758.3 1195.2,746.4 1182.7,746.4 1179.5,752.1 1177.6,760.2 1193.9,768.4 1203.9,768.4 1217.1,771.5 1226.5,768.4 1259.1,780.3 1269.7,784.0 1273.5,789.0 1285.4,792.0 1304.2,781.5 1320.4,781.5 1329.2,784.0 1341.0,784.0" fill="none" stroke="#1f77b4" stroke-width="2.85" stroke-linejoin="round" stroke-linecap="square"/>
<polyline points="1250.3,792.0 1265.3,776.5 1281.6,748.9 1296.6,726.4 1306.7,714.5 1336.7,704.5 1341.0,704.1" fill="none" stroke="#1f77b4" stroke-width="2.85" stroke-linejoin="round" stroke-linecap="square"/>
<polyline points="960.0,557.5 968.8,566.3 978.8,571.9 993.8,577.0 993.6,580.1 990.1,579.8 997.6,583.8 1002.6,584.5 1008.9,592.6 1010.1,598.2 1002.6,596.4 993.2,590.1 997.6,592.6 1000.1,583.8 1003.8,595.1 1010.1,598.2 1028.9,605.8 1043.9,622.0 1060.2,630.2 1073.4,632.7 1084.0,635.2 1090.9,643.3 1100.3,648.4 1115.3,659.0" fill="none" stroke="#1f77b4" stroke-width="2.85" stroke-linejoin="round" stroke-linecap="square"/>
<polyline points="1023.9,540.0 1030.8,547.5 1035.8,558.2 1038.9,560.7 1048.9,560.7 1057.1,566.3 1074.6,587.6 1079.6,587.6 1097.2,612.0 1097.8,605.8 1114.7,627.1 1126.6,637.7 1134.1,640.2 1142.9,651.5 1151.7,672.0" fill="none" stroke="#1f77b4" stroke-width="2.85" stroke-linejoin="round" stroke-linecap="square"/>
<polyline points="883.2,430.0 875.7,446.3 871.9,460.1 878.8,478.2 878.8,493.9 876.9,507.7 876.9,520.2 871.9,520.8 877.5,526.5 883.2,534.0 887.6,542.7 888.8,562.0" fill="none" stroke="#1f77b4" stroke-width="2.85" stroke-linejoin="round" stroke-linecap="square"/>
<polyline points="883.2,430.0 886.7,448.0 890.1,470.1 891.3,476.3 891.9,470.1 901.3,476.3 910.1,487.6 917.6,500.1 923.3,513.9 922.6,516.4 910.7,510.2 908.9,515.8 912.6,518.3 917.6,518.3 925.8,526.5 925.1,531.5 932.0,542.1 950.2,547.8 960.2,557.8 966.5,562.0" fill="none" stroke="#1f77b4" stroke-width="2.85" stroke-linejoin="round" stroke-linecap="square"/>
<polyline points="965.8,465.7 973.4,456.3" fill="none" stroke="#1f77b4" stroke-width="2.85" stroke-linejoin="round" stroke-linecap="square"/>
<polyline points="973.4,456.3 976.5,456.9 977.8,470.1 982.1,483.2 989.0,489.5 993.4,497.0 997.8,497.0 1000.3,508.3 1002.2,498.9 1003.4,518.9 1008.4,520.8 1010.3,512.7 1014.1,512.7 1011.6,519.6 1008.4,520.8 1020.3,534.0 1025.4,542.7 1031.0,548.4 1035.4,557.8" fill="none" stroke="#1f77b4" stroke-width="2.85" stroke-linejoin="round" stroke-linecap="square"/>
<polyline points="887.6,550.0 888.2,560.0 892.0,579.4 891.7,620.1 893.8,640.2 897.0,640.2 898.2,649.0 900.1,654.0 903.9,669.0 903.9,680.3 896.3,680.3 892.0,670.3 890.7,662.1 893.2,654.0 893.8,640.2" fill="none" stroke="#1f77b4" stroke-width="2.85" stroke-linejoin="round" stroke-linecap="square"/>
<polyline points="897.0,640.2 900.1,660.2 898.2,674.0 896.3,680.3" fill="none" stroke="#1f77b4" stroke-width="2.85" stroke-linejoin="round" stroke-linecap="square"/>
<polyline points="892.0,670.0 896.3,680.6 903.9,680.6 903.9,670.0" fill="none" stroke="#1f77b4" stroke-width="2.85" stroke-linejoin="round" stroke-linecap="square"/>
<polyline points="896.3,680.6 897.0,688.8 892.6,702.6 887.6,713.8 881.3,718.9 878.2,726.4 875.1,722.6 871.9,733.9 873.8,733.9 875.7,725.1 880.1,740.1 884.4,752.0 896.3,765.8 902.6,776.5 908.9,784.6 918.9,792.1 932.0,799.7" fill="none" stroke="#1f77b4" stroke-width="2.85" stroke-linejoin="round" stroke-linecap="square"/>
<polyline points="887.6,713.8 888.8,715.1 887.0,723.9 881.3,730.1 878.2,726.4" fill="none" stroke="#1f77b4" stroke-width="2.85" stroke-linejoin="round" stroke-linecap="square"/>
<polyline points="882.6,720.1 885.1,725.1 887.6,716.3" fill="none" stroke="#1f77b4" stroke-width="2.85" stroke-linejoin="round" stroke-linecap="square"/>
<polyline points="931.6,799.9 943.8,800.1 956.3,805.8 978.9,810.8 987.0,813.9 1000.2,792.0 1013.3,795.1 1035.9,795.1 1044.0,790.1 1045.3,784.5 1054.7,781.3 1051.5,778.8 1061.6,782.0 1074.7,784.5 1087.2,784.5 1086.6,781.3 1092.9,781.3 1089.1,784.5 1096.6,787.4 1102.9,787.0 1109.2,790.1 1121.7,792.9 1126.7,792.6 1125.4,789.5 1126.7,784.1 1131.7,784.1 1145.5,791.4 1151.0,793.9" fill="none" stroke="#1f77b4" stroke-width="2.85" stroke-linejoin="round" stroke-linecap="square"/>
<polyline points="1130.0,783.8 1145.7,791.4 1151.3,794.5 1156.9,800.8 1166.3,800.8 1180.1,803.9 1178.2,795.1 1172.0,794.5 1163.2,791.4 1180.1,802.0 1189.5,808.3 1198.9,810.8 1208.9,816.4 1215.8,813.3 1222.1,816.2 1235.2,816.2 1230.2,808.3 1242.1,811.2 1235.2,808.3 1235.8,802.6 1241.5,797.0 1250.9,792.0" fill="none" stroke="#1f77b4" stroke-width="2.85" stroke-linejoin="round" stroke-linecap="square"/>
<polyline points="1151.3,794.5 1143.8,787.0 1145.7,783.8 1151.3,783.8 1157.6,789.5 1155.7,795.1 1151.3,794.5" fill="none" stroke="#1f77b4" stroke-width="2.85" stroke-linejoin="round" stroke-linecap="square"/>
<polyline points="1143.8,787.0 1155.1,795.1" fill="none" stroke="#1f77b4" stroke-width="2.85" stroke-linejoin="round" stroke-linecap="square"/>
<polyline points="1496.1,343.0 1500.3,343.0 1505.7,340.1 1507.4,343.8 1501.5,348.0 1504.4,348.0 1513.6,340.5 1523.6,340.5 1523.6,333.0 1525.3,329.6 1522.8,329.6 1516.1,335.1 1512.4,340.1 1504.4,348.0 1503.6,350.1 1500.7,363.5 1497.7,369.3 1491.9,373.5 1480.6,377.7 1472.7,385.6 1468.1,388.5 1464.7,385.6 1463.1,388.5 1461.0,396.0 1458.1,403.1" fill="none" stroke="#1f77b4" stroke-width="2.85" stroke-linejoin="round" stroke-linecap="square"/>
<polyline points="1009.7,514.2 1010.3,519.2 1012.2,513.7" fill="none" stroke="#1f77b4" stroke-width="2.85" stroke-linejoin="round" stroke-linecap="square"/>
<polyline points="1000.5,500.1 1001.0,507.9 1001.6,500.8" fill="none" stroke="#1f77b4" stroke-width="2.85" stroke-linejoin="round" stroke-linecap="square"/>
<rect x="839.7" y="305.2" width="717.5" height="535" fill="none" stroke="#000" stroke-width="1.6"/>
</svg>
</div>
</body></html>
